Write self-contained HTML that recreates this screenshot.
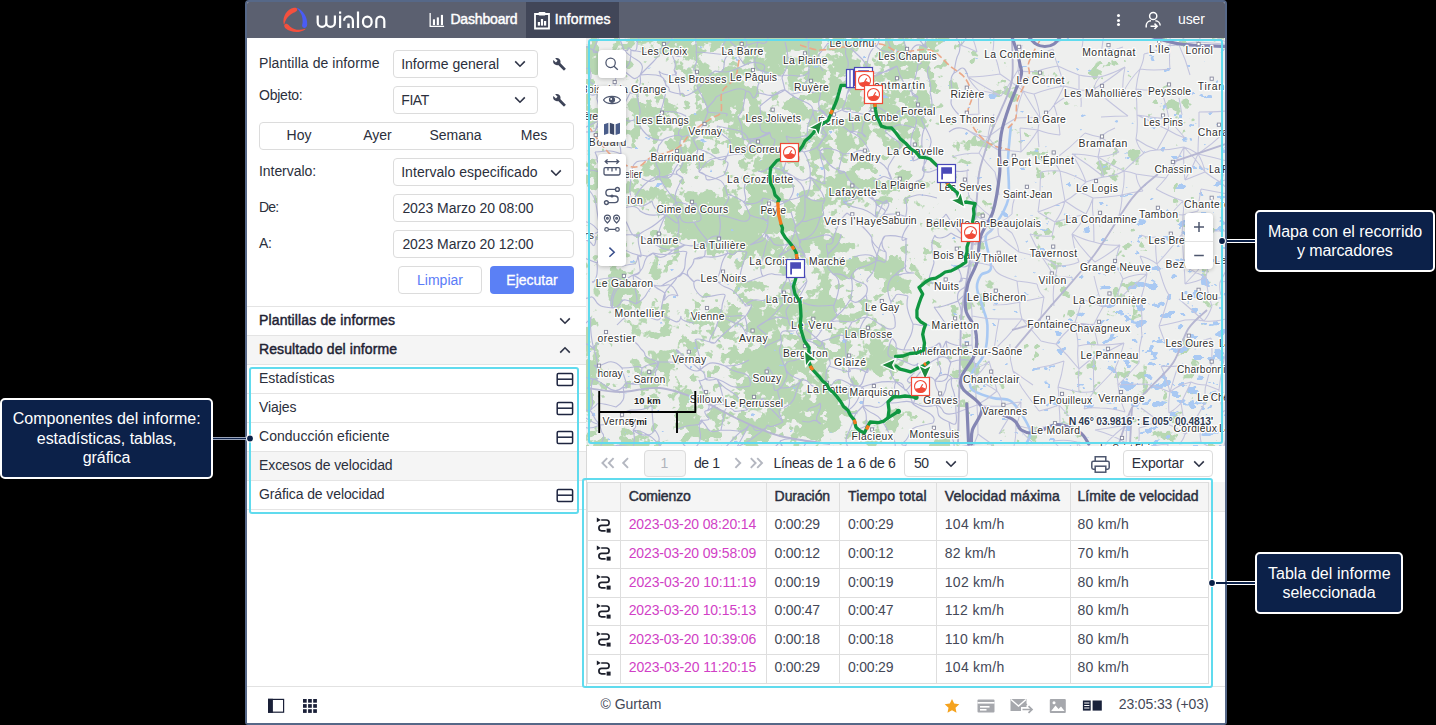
<!DOCTYPE html>
<html><head><meta charset="utf-8">
<style>
*{box-sizing:border-box;margin:0;padding:0}
html,body{width:1436px;height:725px;background:#000;overflow:hidden}
body{font-family:"Liberation Sans",sans-serif;font-size:14px;color:#2b2f3c;position:relative}
.abs{position:absolute}
#win{position:absolute;left:245px;top:0;width:982px;height:725px;background:#fff;border:2px solid #566888;border-radius:4px 4px 3px 3px;overflow:hidden}
#in{position:absolute;left:-247px;top:-2px;width:1436px;height:725px}
#topbar{position:absolute;left:247px;top:2px;width:978px;height:36px;background:#5b6070}
.t{position:absolute;white-space:nowrap;line-height:16px;transform-origin:0 50%}
.lbl{color:#2b2f3c;font-size:14px}
.box{position:absolute;border:1px solid #dcdcdc;border-radius:4px;background:#fff}
.hl{position:absolute;border:2px solid #60dbee;border-radius:3px}
.sep{position:absolute;height:1px;background:#e3e3e3}
.callout{position:absolute;background:#0c2149;border:2px solid #fff;border-radius:5px;color:#fff;font-size:16px;line-height:19px;text-align:center}
</style></head><body>
<div id="win"><div id="in">
<div class="abs" style="left:247px;top:2px;width:978px;height:36px;background:#5b6070;"></div>
<div class="abs" style="left:526px;top:2px;width:93px;height:36px;background:#414658;"></div>
<svg class="abs" style="left:281px;top:5px" width="30" height="30" viewBox="0 0 30 30">
<path d="M2.7 19.2 C1.2 11.5 6 4.2 12.8 2.8 C15.6 2.3 17.4 4.2 15.6 6 C14.8 6.9 13.6 7.2 12.4 7.8 C8 10 4.6 14 3.4 19.3 Z" fill="#f4503e"/>
<path d="M16.4 3.1 C21.8 5.6 26.6 12 26.2 19.5 C26.1 23 22.6 24 21.3 21.6 C20.7 20.4 21.4 19 21.6 17.4 C22 12.4 20.4 7.6 16.1 3.5 Z" fill="#4a5cf5"/>
<path d="M24.4 24.2 C19.4 28.2 10.2 28 4.4 23.2 C2 21 3.6 18.2 6.2 19 C7.4 19.4 8 20.6 9 21.4 C13 24.8 18.6 25.8 24.2 23.7 Z" fill="#f4503e"/>
</svg>
<svg class="abs" style="left:314px;top:9px" width="76" height="22" viewBox="314 9 76 22" fill="none" stroke="#fff" stroke-width="2.2">
<path d="M317.7 15.4 V22.5 A4.3 4.3 0 0 0 326.3 22.5 V15.4 M326.3 22.5 A4.3 4.3 0 0 0 334.9 22.5 V15.4"/>
<path d="M340.1 11.4 V13.7 M340.1 15.4 V27.9"/>
<path d="M344.1 20.8 A4.4 4.4 0 0 1 352.9 20.8 V27.9"/>
<path d="M348.5 23.4 V27.9" stroke-width="2.4"/>
<path d="M358 11.4 V27.9"/>
<path d="M363 21.2 A4.3 4.6 0 0 1 371.6 21.2 V22.2 A4.3 4.6 0 0 1 363 22.2 Z"/>
<path d="M376.3 27.9 V20.9 A4 4.3 0 0 1 384.3 20.9 V27.9"/>
</svg>
<svg class="abs" style="left:429px;top:12px" width="17" height="17" viewBox="0 0 17 17" fill="#fff">
<path d="M0.500 1 h1.300 v12.700 h13.300 v1.200 h-14.600 z"/><rect x="3.9" y="7.3" width="2.100" height="5.800"/><rect x="7.800" y="5.4" width="2.100" height="7.700"/><rect x="11.9" y="2.9" width="2.100" height="10.2"/></svg>
<div class="t" style="left:450.40px;top:10.90px;font-size:14px;line-height:16px;color:#fff;letter-spacing:-0.165px;-webkit-text-stroke:0.45px #fff;">Dashboard</div>
<svg class="abs" style="left:533px;top:11px" width="18" height="19" viewBox="0 0 18 19">
<path d="M2 3 h14 v14.5 h-14 z" fill="none" stroke="#fff" stroke-width="1.8"/><rect x="5.5" y="1" width="7" height="3.4" rx="1" fill="#fff"/>
<rect x="4.8" y="11" width="2.2" height="3.6" fill="#fff"/><rect x="7.9" y="8" width="2.2" height="6.6" fill="#fff"/><rect x="11" y="10" width="2.2" height="4.6" fill="#fff"/></svg>
<div class="t" style="left:554.80px;top:10.90px;font-size:14px;line-height:16px;color:#fff;letter-spacing:0.168px;-webkit-text-stroke:0.45px #fff;">Informes</div>
<div class="abs" style="left:1117.3px;top:13.7px;width:3px;height:3px;border-radius:50%;background:#fff"></div>
<div class="abs" style="left:1117.3px;top:18.5px;width:3px;height:3px;border-radius:50%;background:#fff"></div>
<div class="abs" style="left:1117.3px;top:23.3px;width:3px;height:3px;border-radius:50%;background:#fff"></div>
<svg class="abs" style="left:1144px;top:10px" width="19" height="20" viewBox="0 0 19 20" fill="none" stroke="#fff" stroke-width="1.5">
<circle cx="9.2" cy="6" r="3.6"/><path d="M2.2 17.5 V15.5 A5 5 0 0 1 7 10.8 M11.4 10.8 A5 5 0 0 1 16.2 15.5"/><path d="M6.5 16.3 H13 M10.5 13.6 L13.2 16.3 L10.5 19"/></svg>
<div class="t" style="left:1178.00px;top:10.90px;font-size:14px;line-height:16px;color:#fff;letter-spacing:-0.108px;">user</div>

<div class="abs" style="left:247px;top:38px;width:339px;height:648px;background:#fff;"></div>
<div class="abs" style="left:586px;top:38px;width:1px;height:648px;background:#d8d8d8;"></div>
<div class="t" style="left:259.00px;top:55.00px;font-size:14px;line-height:16px;color:#2b2f3c;letter-spacing:0.072px;">Plantilla de informe</div>
<div class="box" style="left:393px;top:50px;width:145px;height:28px;"></div>
<div class="t" style="left:401.20px;top:56.00px;font-size:14px;line-height:16px;color:#2b2f3c;letter-spacing:-0.016px;">Informe general</div>
<svg class="abs" style="left:514px;top:59.8px" width="12" height="8" viewBox="0 0 12 8" fill="none" stroke="#2f3447" stroke-width="1.6"><path d="M1.2 1.4 L6 6.2 L10.8 1.4"/></svg>
<svg class="abs" style="left:553px;top:58px" width="14" height="13" viewBox="0 0 14 13"><path d="M12.6 10.4 L7.3 5.1 C7.8 3.7 7.5 2.2 6.4 1.1 C5.3 0 3.600 -0.300 2.200 0.300 L4.6 2.7 L2.9 4.400 L0.400 2.000 C-0.200 3.300 0.100 5.000 1.200 6.100 C2.300 7.200 3.900 7.500 5.200 7.000 L10.5 12.3 C10.800 12.600 11.200 12.600 11.400 12.300 L12.700 11.000 C13.000 10.900 13.000 10.600 12.600 10.400 Z" fill="#3e4458"/></svg>
<div class="t" style="left:259.00px;top:87.30px;font-size:14px;line-height:16px;color:#2b2f3c;letter-spacing:-0.234px;">Objeto:</div>
<div class="box" style="left:393px;top:86px;width:145px;height:28px;"></div>
<div class="t" style="left:401.30px;top:92.00px;font-size:14px;line-height:16px;color:#2b2f3c;letter-spacing:-0.448px;">FIAT</div>
<svg class="abs" style="left:514px;top:95.8px" width="12" height="8" viewBox="0 0 12 8" fill="none" stroke="#2f3447" stroke-width="1.6"><path d="M1.2 1.4 L6 6.2 L10.8 1.4"/></svg>
<svg class="abs" style="left:553px;top:94px" width="14" height="13" viewBox="0 0 14 13"><path d="M12.6 10.4 L7.3 5.1 C7.8 3.7 7.5 2.2 6.4 1.1 C5.3 0 3.600 -0.300 2.200 0.300 L4.6 2.7 L2.9 4.400 L0.400 2.000 C-0.200 3.300 0.100 5.000 1.200 6.100 C2.300 7.200 3.900 7.500 5.200 7.000 L10.5 12.3 C10.800 12.600 11.200 12.600 11.400 12.300 L12.700 11.000 C13.000 10.900 13.000 10.600 12.600 10.400 Z" fill="#3e4458"/></svg>
<div class="box" style="left:259px;top:122px;width:315px;height:28px;"></div>
<div class="t" style="left:286.55px;top:127.00px;font-size:14px;line-height:16px;color:#2b2f3c;">Hoy</div>
<div class="t" style="left:363.23px;top:127.00px;font-size:14px;line-height:16px;color:#2b2f3c;">Ayer</div>
<div class="t" style="left:429.43px;top:127.00px;font-size:14px;line-height:16px;color:#2b2f3c;">Semana</div>
<div class="t" style="left:520.78px;top:127.00px;font-size:14px;line-height:16px;color:#2b2f3c;">Mes</div>
<div class="t" style="left:259.00px;top:163.00px;font-size:14px;line-height:16px;color:#2b2f3c;letter-spacing:-0.058px;">Intervalo:</div>
<div class="box" style="left:393px;top:158px;width:181px;height:28px;"></div>
<div class="t" style="left:401.20px;top:164.00px;font-size:14px;line-height:16px;color:#2b2f3c;letter-spacing:0.045px;">Intervalo especificado</div>
<svg class="abs" style="left:550px;top:168.5px" width="12" height="8" viewBox="0 0 12 8" fill="none" stroke="#2f3447" stroke-width="1.6"><path d="M1.2 1.4 L6 6.2 L10.8 1.4"/></svg>
<div class="t" style="left:259.00px;top:199.00px;font-size:14px;line-height:16px;color:#2b2f3c;letter-spacing:-0.762px;">De:</div>
<div class="box" style="left:393px;top:194px;width:181px;height:28px;"></div>
<div class="t" style="left:402.40px;top:200.00px;font-size:14px;line-height:16px;color:#2b2f3c;letter-spacing:-0.069px;">2023 Marzo 20 08:00</div>
<div class="t" style="left:259.00px;top:235.00px;font-size:14px;line-height:16px;color:#2b2f3c;letter-spacing:-0.364px;">A:</div>
<div class="box" style="left:393px;top:230px;width:181px;height:28px;"></div>
<div class="t" style="left:402.40px;top:236.00px;font-size:14px;line-height:16px;color:#2b2f3c;letter-spacing:-0.069px;">2023 Marzo 20 12:00</div>
<div class="box" style="left:398px;top:266px;width:84px;height:28px;"></div>
<div class="t" style="left:417.05px;top:272.00px;font-size:14px;line-height:16px;color:#5b7cf7;">Limpiar</div>
<div class="abs" style="left:490px;top:266px;width:84px;height:28px;background:#5b80f5;border-radius:4px"></div>
<div class="t" style="left:506.32px;top:272.00px;font-size:14px;line-height:16px;color:#fff;-webkit-text-stroke:0.3px #fff;">Ejecutar</div>
<div class="abs" style="left:247px;top:306px;width:339px;height:1px;background:#e4e4e4;"></div>
<div class="t" style="left:259.00px;top:312.00px;font-size:14px;line-height:16px;color:#1e2233;letter-spacing:0.134px;-webkit-text-stroke:0.45px #1e2233;">Plantillas de informes</div>
<svg class="abs" style="left:559px;top:317px" width="12" height="8" viewBox="0 0 12 8" fill="none" stroke="#2f3447" stroke-width="1.6"><path d="M1.2 1.4 L6 6.2 L10.8 1.4"/></svg>
<div class="abs" style="left:247px;top:335px;width:339px;height:1px;background:#e4e4e4;"></div>
<div class="abs" style="left:247px;top:336px;width:339px;height:28px;background:#f5f5f5;"></div>
<div class="t" style="left:259.00px;top:341.00px;font-size:14px;line-height:16px;color:#1e2233;letter-spacing:0.087px;-webkit-text-stroke:0.45px #1e2233;">Resultado del informe</div>
<svg class="abs" style="left:559px;top:345.5px" width="12" height="8" viewBox="0 0 12 8" fill="none" stroke="#2f3447" stroke-width="1.6"><path d="M1.2 6.6 L6 1.8 L10.8 6.6"/></svg>
<div class="abs" style="left:247px;top:364px;width:339px;height:1px;background:#e4e4e4;"></div>
<div class="t" style="left:259.00px;top:370.00px;font-size:14px;line-height:16px;color:#2b2f3c;letter-spacing:0.002px;">Estadísticas</div>
<div class="abs" style="left:247px;top:393px;width:339px;height:1px;background:#e4e4e4;"></div>
<svg class="abs" style="left:556px;top:372.2px" width="18" height="15" viewBox="0 0 18 15" fill="none" stroke="#1e2540" stroke-width="1.5"><rect x="1.2" y="1.5" width="15.4" height="12" rx="1.2"/><path d="M1.2 7.2 H16.6"/></svg>
<div class="t" style="left:259.00px;top:399.00px;font-size:14px;line-height:16px;color:#2b2f3c;letter-spacing:-0.063px;">Viajes</div>
<div class="abs" style="left:247px;top:422px;width:339px;height:1px;background:#e4e4e4;"></div>
<svg class="abs" style="left:556px;top:401.2px" width="18" height="15" viewBox="0 0 18 15" fill="none" stroke="#1e2540" stroke-width="1.5"><rect x="1.2" y="1.5" width="15.4" height="12" rx="1.2"/><path d="M1.2 7.2 H16.6"/></svg>
<div class="t" style="left:259.00px;top:428.00px;font-size:14px;line-height:16px;color:#2b2f3c;letter-spacing:0.027px;">Conducción eficiente</div>
<div class="abs" style="left:247px;top:451px;width:339px;height:1px;background:#e4e4e4;"></div>
<svg class="abs" style="left:556px;top:430.2px" width="18" height="15" viewBox="0 0 18 15" fill="none" stroke="#1e2540" stroke-width="1.5"><rect x="1.2" y="1.5" width="15.4" height="12" rx="1.2"/><path d="M1.2 7.2 H16.6"/></svg>
<div class="abs" style="left:247px;top:452px;width:339px;height:28px;background:#f5f5f5;"></div>
<div class="t" style="left:259.00px;top:457.00px;font-size:14px;line-height:16px;color:#2b2f3c;letter-spacing:-0.095px;">Excesos de velocidad</div>
<div class="abs" style="left:247px;top:480px;width:339px;height:1px;background:#e4e4e4;"></div>
<div class="t" style="left:259.00px;top:486.00px;font-size:14px;line-height:16px;color:#2b2f3c;letter-spacing:-0.106px;">Gráfica de velocidad</div>
<div class="abs" style="left:247px;top:509px;width:339px;height:1px;background:#e4e4e4;"></div>
<svg class="abs" style="left:556px;top:488.2px" width="18" height="15" viewBox="0 0 18 15" fill="none" stroke="#1e2540" stroke-width="1.5"><rect x="1.2" y="1.5" width="15.4" height="12" rx="1.2"/><path d="M1.2 7.2 H16.6"/></svg>
<div class="hl" style="left:249px;top:367px;width:330px;height:147px;"></div>
<svg class="abs" style="left:586px;top:38px" width="639" height="408" viewBox="586 38 639 408" font-family="Liberation Sans, sans-serif">
<defs><filter id="ff" x="586" y="38" width="639" height="408" filterUnits="userSpaceOnUse" color-interpolation-filters="sRGB">
<feTurbulence type="fractalNoise" baseFrequency="0.02" numOctaves="3" seed="4" result="n"/>
<feColorMatrix in="n" type="matrix" values="0 0 0 0 0 0 0 0 0 0 0 0 0 0 0 1 0 0 0 0" result="na0"/><feTurbulence type="fractalNoise" baseFrequency="0.1" numOctaves="3" seed="11" result="m"/>
<feColorMatrix in="m" type="matrix" values="0 0 0 0 0 0 0 0 0 0 0 0 0 0 0 1 0 0 0 0" result="ma"/>
<feComposite in="na0" in2="ma" operator="arithmetic" k1="0" k2="0.58" k3="0.42" k4="0" result="na"/>
<feGaussianBlur in="SourceGraphic" stdDeviation="12" result="d"/>
<feComposite in="na" in2="d" operator="arithmetic" k1="0" k2="1" k3="0.45" k4="-0.22" result="s"/>
<feComponentTransfer in="s" result="t"><feFuncA type="linear" slope="40" intercept="-19.5"/></feComponentTransfer>
<feFlood flood-color="#b7d7b2"/><feComposite in2="t" operator="in"/>
</filter><filter id="fw" x="586" y="38" width="639" height="408" filterUnits="userSpaceOnUse" color-interpolation-filters="sRGB">
<feTurbulence type="fractalNoise" baseFrequency="0.075 0.11" numOctaves="3" seed="5" result="n"/>
<feColorMatrix in="n" type="matrix" values="0 0 0 0 0 0 0 0 0 0 0 0 0 0 0 1 0 0 0 0" result="na"/>
<feGaussianBlur in="SourceGraphic" stdDeviation="14" result="d"/>
<feComposite in="na" in2="d" operator="arithmetic" k1="0" k2="1" k3="0.6" k4="-0.4" result="s"/>
<feComponentTransfer in="s" result="t"><feFuncA type="linear" slope="40" intercept="-19.5"/></feComponentTransfer>
<feFlood flood-color="#a9c9f3"/><feComposite in2="t" operator="in"/>
</filter></defs>
<rect x="586" y="38" width="639" height="408" fill="#eeefee"/>
<g filter="url(#ff)"><rect x="527" y="-22" width="124" height="124" fill="#000" fill-opacity="0.452"/><rect x="651" y="-22" width="64" height="124" fill="#000" fill-opacity="0.631"/><rect x="715" y="-22" width="64" height="124" fill="#000" fill-opacity="0.566"/><rect x="779" y="-22" width="64" height="124" fill="#000" fill-opacity="0.574"/><rect x="843" y="-22" width="64" height="124" fill="#000" fill-opacity="0.677"/><rect x="907" y="-22" width="64" height="124" fill="#000" fill-opacity="0.284"/><rect x="971" y="-22" width="64" height="124" fill="#000" fill-opacity="0.268"/><rect x="1035" y="-22" width="64" height="124" fill="#000" fill-opacity="0.110"/><rect x="1099" y="-22" width="64" height="124" fill="#000" fill-opacity="0.276"/><rect x="1163" y="-22" width="124" height="124" fill="#000" fill-opacity="0.222"/><rect x="527" y="102" width="124" height="64" fill="#000" fill-opacity="0.268"/><rect x="651" y="102" width="64" height="64" fill="#000" fill-opacity="0.465"/><rect x="715" y="102" width="64" height="64" fill="#000" fill-opacity="0.671"/><rect x="779" y="102" width="64" height="64" fill="#000" fill-opacity="0.604"/><rect x="843" y="102" width="64" height="64" fill="#000" fill-opacity="0.518"/><rect x="907" y="102" width="64" height="64" fill="#000" fill-opacity="0.235"/><rect x="971" y="102" width="64" height="64" fill="#000" fill-opacity="0.285"/><rect x="1035" y="102" width="64" height="64" fill="#000" fill-opacity="0.212"/><rect x="1099" y="102" width="64" height="64" fill="#000" fill-opacity="0.226"/><rect x="1163" y="102" width="124" height="64" fill="#000" fill-opacity="0.030"/><rect x="527" y="166" width="124" height="64" fill="#000" fill-opacity="0.431"/><rect x="651" y="166" width="64" height="64" fill="#000" fill-opacity="0.615"/><rect x="715" y="166" width="64" height="64" fill="#000" fill-opacity="0.610"/><rect x="779" y="166" width="64" height="64" fill="#000" fill-opacity="0.473"/><rect x="843" y="166" width="64" height="64" fill="#000" fill-opacity="0.481"/><rect x="907" y="166" width="64" height="64" fill="#000" fill-opacity="0.253"/><rect x="971" y="166" width="64" height="64" fill="#000" fill-opacity="0.224"/><rect x="1035" y="166" width="64" height="64" fill="#000" fill-opacity="0.265"/><rect x="1099" y="166" width="64" height="64" fill="#000" fill-opacity="0.066"/><rect x="1163" y="166" width="124" height="64" fill="#000" fill-opacity="0.087"/><rect x="527" y="230" width="124" height="64" fill="#000" fill-opacity="0.307"/><rect x="651" y="230" width="64" height="64" fill="#000" fill-opacity="0.370"/><rect x="715" y="230" width="64" height="64" fill="#000" fill-opacity="0.664"/><rect x="779" y="230" width="64" height="64" fill="#000" fill-opacity="0.663"/><rect x="843" y="230" width="64" height="64" fill="#000" fill-opacity="0.372"/><rect x="907" y="230" width="64" height="64" fill="#000" fill-opacity="0.301"/><rect x="971" y="230" width="64" height="64" fill="#000" fill-opacity="0.139"/><rect x="1035" y="230" width="64" height="64" fill="#000" fill-opacity="0.388"/><rect x="1099" y="230" width="64" height="64" fill="#000" fill-opacity="0.076"/><rect x="1163" y="230" width="124" height="64" fill="#000" fill-opacity="0.244"/><rect x="527" y="294" width="124" height="64" fill="#000" fill-opacity="0.353"/><rect x="651" y="294" width="64" height="64" fill="#000" fill-opacity="0.369"/><rect x="715" y="294" width="64" height="64" fill="#000" fill-opacity="0.483"/><rect x="779" y="294" width="64" height="64" fill="#000" fill-opacity="0.636"/><rect x="843" y="294" width="64" height="64" fill="#000" fill-opacity="0.400"/><rect x="907" y="294" width="64" height="64" fill="#000" fill-opacity="0.303"/><rect x="971" y="294" width="64" height="64" fill="#000" fill-opacity="0.139"/><rect x="1035" y="294" width="64" height="64" fill="#000" fill-opacity="0.253"/><rect x="1099" y="294" width="64" height="64" fill="#000" fill-opacity="0.197"/><rect x="1163" y="294" width="124" height="64" fill="#000" fill-opacity="0.252"/><rect x="527" y="358" width="124" height="64" fill="#000" fill-opacity="0.340"/><rect x="651" y="358" width="64" height="64" fill="#000" fill-opacity="0.479"/><rect x="715" y="358" width="64" height="64" fill="#000" fill-opacity="0.663"/><rect x="779" y="358" width="64" height="64" fill="#000" fill-opacity="0.542"/><rect x="843" y="358" width="64" height="64" fill="#000" fill-opacity="0.405"/><rect x="907" y="358" width="64" height="64" fill="#000" fill-opacity="0.200"/><rect x="971" y="358" width="64" height="64" fill="#000" fill-opacity="0.031"/><rect x="1035" y="358" width="64" height="64" fill="#000" fill-opacity="0.081"/><rect x="1099" y="358" width="64" height="64" fill="#000" fill-opacity="0.187"/><rect x="1163" y="358" width="124" height="64" fill="#000" fill-opacity="0.301"/><rect x="527" y="422" width="124" height="124" fill="#000" fill-opacity="0.547"/><rect x="651" y="422" width="64" height="124" fill="#000" fill-opacity="0.270"/><rect x="715" y="422" width="64" height="124" fill="#000" fill-opacity="0.417"/><rect x="779" y="422" width="64" height="124" fill="#000" fill-opacity="0.212"/><rect x="843" y="422" width="64" height="124" fill="#000" fill-opacity="0.396"/><rect x="907" y="422" width="64" height="124" fill="#000" fill-opacity="0.490"/><rect x="971" y="422" width="64" height="124" fill="#000" fill-opacity="0.299"/><rect x="1035" y="422" width="64" height="124" fill="#000" fill-opacity="0.003"/><rect x="1099" y="422" width="64" height="124" fill="#000" fill-opacity="0.351"/><rect x="1163" y="422" width="124" height="124" fill="#000" fill-opacity="0.317"/></g>
<g filter="url(#fw)"><rect x="527" y="-22" width="124" height="124" fill="#000" fill-opacity="0.115"/><rect x="651" y="-22" width="64" height="124" fill="#000" fill-opacity="0.145"/><rect x="715" y="-22" width="64" height="124" fill="#000" fill-opacity="0.105"/><rect x="779" y="-22" width="64" height="124" fill="#000" fill-opacity="0.159"/><rect x="843" y="-22" width="64" height="124" fill="#000" fill-opacity="0.125"/><rect x="907" y="-22" width="64" height="124" fill="#000" fill-opacity="0.149"/><rect x="971" y="-22" width="64" height="124" fill="#000" fill-opacity="0.180"/><rect x="1035" y="-22" width="64" height="124" fill="#000" fill-opacity="0.192"/><rect x="1099" y="-22" width="64" height="124" fill="#000" fill-opacity="0.171"/><rect x="1163" y="-22" width="124" height="124" fill="#000" fill-opacity="0.215"/><rect x="527" y="102" width="124" height="64" fill="#000" fill-opacity="0.135"/><rect x="651" y="102" width="64" height="64" fill="#000" fill-opacity="0.132"/><rect x="715" y="102" width="64" height="64" fill="#000" fill-opacity="0.169"/><rect x="779" y="102" width="64" height="64" fill="#000" fill-opacity="0.144"/><rect x="843" y="102" width="64" height="64" fill="#000" fill-opacity="0.153"/><rect x="907" y="102" width="64" height="64" fill="#000" fill-opacity="0.131"/><rect x="971" y="102" width="64" height="64" fill="#000" fill-opacity="0.234"/><rect x="1035" y="102" width="64" height="64" fill="#000" fill-opacity="0.203"/><rect x="1099" y="102" width="64" height="64" fill="#000" fill-opacity="0.233"/><rect x="1163" y="102" width="124" height="64" fill="#000" fill-opacity="0.357"/><rect x="527" y="166" width="124" height="64" fill="#000" fill-opacity="0.174"/><rect x="651" y="166" width="64" height="64" fill="#000" fill-opacity="0.125"/><rect x="715" y="166" width="64" height="64" fill="#000" fill-opacity="0.140"/><rect x="779" y="166" width="64" height="64" fill="#000" fill-opacity="0.132"/><rect x="843" y="166" width="64" height="64" fill="#000" fill-opacity="0.142"/><rect x="907" y="166" width="64" height="64" fill="#000" fill-opacity="0.147"/><rect x="971" y="166" width="64" height="64" fill="#000" fill-opacity="0.157"/><rect x="1035" y="166" width="64" height="64" fill="#000" fill-opacity="0.213"/><rect x="1099" y="166" width="64" height="64" fill="#000" fill-opacity="0.216"/><rect x="1163" y="166" width="124" height="64" fill="#000" fill-opacity="0.273"/><rect x="527" y="230" width="124" height="64" fill="#000" fill-opacity="0.164"/><rect x="651" y="230" width="64" height="64" fill="#000" fill-opacity="0.146"/><rect x="715" y="230" width="64" height="64" fill="#000" fill-opacity="0.137"/><rect x="779" y="230" width="64" height="64" fill="#000" fill-opacity="0.135"/><rect x="843" y="230" width="64" height="64" fill="#000" fill-opacity="0.175"/><rect x="907" y="230" width="64" height="64" fill="#000" fill-opacity="0.157"/><rect x="971" y="230" width="64" height="64" fill="#000" fill-opacity="0.244"/><rect x="1035" y="230" width="64" height="64" fill="#000" fill-opacity="0.261"/><rect x="1099" y="230" width="64" height="64" fill="#000" fill-opacity="0.375"/><rect x="1163" y="230" width="124" height="64" fill="#000" fill-opacity="0.482"/><rect x="527" y="294" width="124" height="64" fill="#000" fill-opacity="0.151"/><rect x="651" y="294" width="64" height="64" fill="#000" fill-opacity="0.158"/><rect x="715" y="294" width="64" height="64" fill="#000" fill-opacity="0.195"/><rect x="779" y="294" width="64" height="64" fill="#000" fill-opacity="0.131"/><rect x="843" y="294" width="64" height="64" fill="#000" fill-opacity="0.150"/><rect x="907" y="294" width="64" height="64" fill="#000" fill-opacity="0.178"/><rect x="971" y="294" width="64" height="64" fill="#000" fill-opacity="0.217"/><rect x="1035" y="294" width="64" height="64" fill="#000" fill-opacity="0.325"/><rect x="1099" y="294" width="64" height="64" fill="#000" fill-opacity="0.445"/><rect x="1163" y="294" width="124" height="64" fill="#000" fill-opacity="0.409"/><rect x="527" y="358" width="124" height="64" fill="#000" fill-opacity="0.135"/><rect x="651" y="358" width="64" height="64" fill="#000" fill-opacity="0.146"/><rect x="715" y="358" width="64" height="64" fill="#000" fill-opacity="0.142"/><rect x="779" y="358" width="64" height="64" fill="#000" fill-opacity="0.155"/><rect x="843" y="358" width="64" height="64" fill="#000" fill-opacity="0.157"/><rect x="907" y="358" width="64" height="64" fill="#000" fill-opacity="0.196"/><rect x="971" y="358" width="64" height="64" fill="#000" fill-opacity="0.192"/><rect x="1035" y="358" width="64" height="64" fill="#000" fill-opacity="0.326"/><rect x="1099" y="358" width="64" height="64" fill="#000" fill-opacity="0.442"/><rect x="1163" y="358" width="124" height="64" fill="#000" fill-opacity="0.487"/><rect x="527" y="422" width="124" height="124" fill="#000" fill-opacity="0.165"/><rect x="651" y="422" width="64" height="124" fill="#000" fill-opacity="0.176"/><rect x="715" y="422" width="64" height="124" fill="#000" fill-opacity="0.097"/><rect x="779" y="422" width="64" height="124" fill="#000" fill-opacity="0.130"/><rect x="843" y="422" width="64" height="124" fill="#000" fill-opacity="0.164"/><rect x="907" y="422" width="64" height="124" fill="#000" fill-opacity="0.116"/><rect x="971" y="422" width="64" height="124" fill="#000" fill-opacity="0.177"/><rect x="1035" y="422" width="64" height="124" fill="#000" fill-opacity="0.303"/><rect x="1099" y="422" width="64" height="124" fill="#000" fill-opacity="0.316"/><rect x="1163" y="422" width="124" height="124" fill="#000" fill-opacity="0.351"/></g>
<path d="M1011.0 125.0 C1010.5 130.8 1008.5 147.5 1008.0 160.0 C1007.5 172.5 1010.5 188.7 1008.0 200.0 C1005.5 211.3 996.8 221.7 993.0 228.0 C989.2 234.3 985.8 231.3 985.5 238.0 C985.2 244.7 991.8 261.8 991.0 268.0 C990.2 274.2 983.3 271.7 981.0 275.0 C978.7 278.3 976.6 282.2 977.0 288.0 C977.4 293.8 981.9 303.8 983.6 310.0 C985.3 316.2 987.2 317.8 987.4 325.0 C987.6 332.2 987.1 345.2 984.6 353.0 C982.1 360.8 974.6 366.0 972.4 372.0 C970.2 378.0 968.1 384.7 971.5 389.0 C974.9 393.3 986.2 395.8 993.0 398.0 C999.8 400.2 1005.8 396.7 1012.0 402.0 C1018.2 407.3 1027.7 423.0 1030.0 430.0 C1032.3 437.0 1026.7 441.7 1026.0 444.0" fill="none" stroke="#a9c9f3" stroke-width="2.6"/>
<path d="M577 49Q583 45 585 46T597 52M577 49Q576 52 569 61T571 74M571 74Q575 74 583 70T590 70M580 91Q582 90 589 94T601 87M575 108Q577 108 584 113T602 118M575 108Q575 114 576 115T568 131M568 131Q574 132 584 132T595 131M576 148Q572 156 573 159T579 171M579 171Q589 169 596 171T603 173M579 171Q577 178 578 180T571 189M571 189Q577 198 580 201T582 221M582 221Q591 222 596 228T599 224M582 221Q580 224 583 226T581 240M581 240Q589 239 592 244T596 238M581 240Q578 245 579 253T568 256M568 256Q573 255 578 256T597 263M582 299Q589 298 591 297T597 303M582 299Q579 301 580 308T570 327M570 327Q579 324 583 324T591 317M570 327Q569 333 573 337T569 349M569 349Q574 349 580 345T594 349M569 349Q573 354 577 356T574 365M574 365Q574 370 573 371T573 385M573 385Q575 386 578 381T593 379M570 399Q572 404 579 407T589 411M570 399Q574 408 582 415T600 425M580 423Q584 428 589 428T600 425M579 444Q582 448 587 452T599 451M579 444Q584 453 583 461T582 475M579 444Q589 452 594 461T602 476M582 475Q588 476 591 476T602 476M600 32Q599 37 595 46T597 52M597 52Q603 52 606 55T624 50M590 70Q592 77 590 80T601 87M601 87Q596 95 597 99T602 118M602 118Q599 118 599 119T595 131M602 118Q601 121 604 128T611 138M602 118Q593 124 584 128T568 131M595 152Q599 152 605 151T621 154M595 152Q598 159 597 159T603 173M589 190Q595 197 596 204T599 224M599 224Q600 232 596 233T596 238M596 238Q596 237 599 237T611 236M597 263Q603 260 606 260T623 266M597 263Q598 273 596 278T592 282M592 282Q598 279 609 278T621 280M597 303Q599 305 601 306T613 308M591 317Q590 323 591 333T594 349M594 349Q595 343 601 342T610 339M594 349Q596 354 597 361T594 365M594 365Q598 367 606 363T622 368M594 365Q598 368 599 374T593 379M593 379Q598 380 607 387T623 387M593 379Q590 387 592 397T589 411M589 411Q596 406 597 404T616 407M589 411Q591 410 593 415T600 425M600 425Q606 425 612 422T622 424M600 425Q601 432 603 434T599 451M599 451Q601 453 606 450T618 445M602 476Q605 472 614 468T621 462M616 35Q622 35 623 32T641 35M616 35Q619 37 621 42T624 50M624 50Q628 52 628 49T631 50M624 50Q628 55 637 60T640 75M623 70Q630 76 633 78T640 75M623 70Q619 75 617 76T615 87M615 87Q621 88 628 92T639 87M615 87Q613 93 615 97T623 107M615 87Q615 95 611 102T602 118M623 107Q625 110 625 117T637 119M623 107Q622 119 618 127T611 138M623 107Q612 113 605 119T595 131M611 138Q617 138 619 143T621 154M611 138Q611 142 616 144T632 148M621 154Q622 160 625 164T622 168M622 168Q622 169 623 171T631 174M613 193Q614 195 619 198T633 202M613 193Q613 202 618 207T616 212M616 212Q619 209 628 207T640 211M616 212Q616 217 614 221T611 236M616 212Q625 217 629 228T639 235M611 236Q614 236 624 235T639 235M611 236Q616 241 621 247T623 266M611 236Q615 238 620 245T638 255M611 236Q603 246 601 253T597 263M623 266Q631 264 634 264T638 255M621 280Q615 286 612 296T613 308M613 308Q619 307 621 302T636 304M617 325Q622 319 629 315T639 315M610 339Q621 336 629 339T641 349M622 368Q629 368 634 367T642 368M622 368Q623 374 626 382T623 387M623 387Q625 383 627 383T631 384M623 387Q625 396 623 400T616 407M622 424Q627 421 633 423T633 430M618 445Q622 446 626 446T634 451M618 445Q618 450 616 453T621 462M641 35Q637 39 637 46T631 50M631 50Q642 52 648 53T665 46M631 50Q631 56 630 61T623 70M640 75Q641 82 640 84T639 87M640 75Q647 74 656 75T666 85M639 87Q636 95 639 105T637 119M639 87Q632 89 629 95T623 107M637 119Q642 121 650 119T661 112M637 119Q639 127 646 134T663 140M631 174Q637 176 645 180T659 176M631 174Q631 179 630 187T633 202M633 202Q637 205 640 206T652 201M640 211Q647 216 656 215T666 215M639 235Q643 237 644 238T656 245M639 235Q637 240 640 250T638 255M638 255Q643 255 646 256T653 253M638 255Q639 263 640 269T633 275M633 275Q641 279 644 283T653 285M633 275Q634 285 636 293T636 304M633 275Q625 279 618 288T613 308M639 315Q647 316 654 319T661 315M641 349Q645 352 645 355T659 362M642 368Q646 365 652 364T659 362M642 368Q642 373 640 377T631 384M631 384Q637 385 649 383T658 381M631 410Q640 410 644 409T652 405M631 410Q625 411 622 415T622 424M633 430Q642 431 646 434T655 430M633 430Q635 436 634 442T634 451M633 430Q641 436 646 435T664 451M634 451Q638 451 640 453T635 462M657 25Q658 26 665 30T678 28M665 46Q673 53 675 55T682 56M665 46Q669 49 673 57T674 70M665 46Q658 57 653 62T640 75M659 71Q662 75 671 75T674 70M659 71Q661 77 662 77T666 85M666 85Q670 88 669 90T680 94M666 85Q666 95 663 104T661 112M661 112Q669 111 675 112T686 116M663 140Q665 138 673 136T682 137M663 140Q659 146 659 145T656 157M656 157Q660 160 665 160T683 159M656 157Q655 164 658 168T659 176M656 157Q647 161 640 161T631 174M659 176Q662 178 669 175T683 178M659 176Q662 184 670 194T676 202M659 176Q651 178 644 185T633 202M652 201Q653 206 655 208T666 215M666 215Q671 219 675 222T678 219M666 215Q663 220 660 228T656 245M666 215Q656 225 648 229T639 235M656 245Q662 249 669 250T685 245M653 253Q665 256 674 253T687 252M653 253Q646 255 644 264T633 275M653 285Q661 287 663 285T677 277M653 285Q656 288 662 291T663 300M653 285Q661 287 667 285T678 296M653 285Q648 291 646 295T636 304M663 300Q664 301 667 297T678 296M663 300Q662 304 661 311T661 315M661 315Q668 318 674 321T681 316M659 362Q666 362 668 362T684 363M659 362Q658 367 656 371T658 381M659 362Q654 372 647 378T631 384M652 405Q652 413 653 423T655 430M655 430Q660 437 659 440T664 451M664 451Q662 453 663 453T658 465M658 465Q664 468 671 470T687 466M678 28Q687 30 692 34T697 33M678 28Q676 33 674 36T665 46M674 70Q677 76 679 87T680 94M680 94Q683 92 684 95T698 89M686 116Q684 123 680 129T682 137M682 137Q688 135 696 134T700 135M682 137Q679 143 680 145T683 159M683 159Q689 160 693 158T698 149M683 159Q683 167 678 170T683 178M683 159Q676 165 673 173T659 176M683 178Q678 186 676 192T676 202M676 202Q681 202 686 204T696 203M676 202Q676 203 673 206T678 219M676 202Q679 207 680 216T694 222M678 219Q680 225 678 234T685 245M685 245Q693 247 700 244T708 241M685 245Q676 247 668 254T653 253M687 252Q685 258 685 265T677 277M677 277Q680 277 682 274T694 282M677 277Q676 280 670 286T663 300M681 316Q680 319 685 321T694 323M677 350Q675 349 679 354T684 363M677 350Q681 354 686 358T700 370M684 363Q687 368 692 370T700 370M678 429Q687 425 695 425T701 420M683 444Q689 450 691 450T696 447M697 33Q709 35 717 35T727 33M697 33Q695 38 696 44T696 52M696 52Q701 52 709 53T728 55M696 52Q698 61 695 66T696 71M696 71Q696 73 696 76T698 89M698 89Q700 92 704 100T708 112M708 112Q712 113 721 113T726 116M708 112Q705 120 703 124T700 135M700 135Q697 139 694 138T698 149M698 149Q707 151 715 157T727 156M698 149Q696 155 698 157T699 172M699 172Q706 173 706 178T724 175M699 172Q709 177 717 179T727 194M696 203Q696 206 700 214T694 222M696 203Q690 207 686 207T678 219M694 222Q694 222 697 227T708 241M708 241Q710 236 717 236T719 240M708 241Q705 249 705 254T694 259M694 259Q701 256 709 257T728 253M694 259Q694 264 689 269T694 282M694 282Q696 279 701 281T716 280M694 282Q693 287 697 292T704 297M704 297Q708 297 717 295T725 296M695 340Q697 338 703 340T715 343M695 340Q697 348 699 355T700 370M700 370Q703 367 708 364T725 366M700 370Q705 372 705 377T717 379M699 380Q699 382 705 379T717 379M699 380Q702 388 707 399T705 411M705 411Q709 411 714 406T728 407M705 411Q704 413 708 417T701 420M701 420Q705 424 708 429T721 430M701 420Q698 424 700 432T696 447M696 447Q699 451 700 450T702 465M727 33Q726 42 723 45T728 55M727 33Q728 41 735 46T741 49M728 55Q724 58 724 66T715 71M715 71Q722 72 726 72T745 65M715 71Q708 76 707 78T698 89M716 97Q723 93 733 90T746 91M716 97Q715 100 710 105T708 112M717 126Q726 128 736 130T748 139M717 126Q720 134 727 138T727 156M727 156Q735 154 740 154T746 150M727 156Q724 162 727 162T724 175M727 156Q717 158 712 159T699 172M727 194Q729 194 737 198T743 202M727 194Q730 198 727 202T719 215M719 215Q726 216 738 220T750 215M719 215Q721 223 720 230T719 240M719 240Q724 244 725 247T728 253M728 253Q734 256 735 253T747 252M728 253Q723 257 721 267T716 280M716 280Q718 283 723 282T741 282M716 280Q721 286 728 288T745 305M725 296Q722 304 722 307T719 315M719 315Q724 317 735 316T745 317M719 315Q718 326 712 335T715 343M719 315Q731 322 738 324T749 344M725 366Q732 366 737 365T749 360M725 366Q732 371 742 373T750 386M717 379Q723 381 729 385T750 386M717 379Q721 387 723 398T728 407M717 379Q721 386 730 391T747 410M728 407Q734 410 734 411T747 410M728 407Q725 408 724 414T721 430M721 430Q731 430 738 431T749 425M716 474Q725 470 731 471T738 470M739 21Q740 28 745 38T741 49M741 49Q745 47 746 46T758 42M741 49Q742 52 738 52T745 65M745 65Q750 61 759 63T763 71M746 91Q750 91 752 96T757 93M746 91Q745 95 744 103T738 117M738 117Q742 124 742 133T748 139M748 139Q758 139 764 135T770 133M748 139Q749 139 751 144T746 150M748 139Q752 141 758 143T770 154M747 181Q743 186 745 194T743 202M743 202Q750 205 756 203T763 198M743 202Q744 202 745 204T750 215M750 215Q754 217 759 218T768 221M750 245Q759 242 762 241T766 234M747 252Q745 257 742 267T741 282M741 282Q742 284 750 281T764 276M745 305Q752 299 758 300T765 300M745 305Q745 307 750 305T745 317M745 317Q748 326 747 332T749 344M745 317Q736 323 727 331T715 343M747 410Q753 402 759 400T762 399M749 425Q752 425 754 429T766 428M749 425Q746 431 742 438T737 447M749 425Q746 429 742 431T725 448M769 26Q769 27 774 28T789 33M769 26Q769 30 768 38T758 42M758 42Q756 48 755 59T763 71M763 71Q769 73 776 75T783 75M763 71Q763 74 760 80T757 93M757 93Q760 93 767 95T785 90M760 106Q761 114 760 124T770 133M770 133Q771 139 774 139T770 154M770 133Q765 136 756 139T746 150M758 171Q763 173 767 169T783 171M763 198Q768 199 774 201T789 200M763 198Q760 209 762 215T768 221M768 221Q768 229 764 234T750 245M766 234Q771 239 773 243T790 244M766 234Q769 240 768 240T763 257M763 257Q760 265 761 271T764 276M764 276Q771 273 773 274T787 275M765 300Q771 301 773 300T790 297M757 327Q766 320 774 318T788 319M757 327Q764 333 766 334T765 348M765 348Q764 347 768 345T781 339M768 367Q766 370 767 373T771 383M768 367Q771 371 776 380T781 388M771 383Q774 383 774 388T781 388M762 399Q766 401 770 402T783 408M762 399Q768 406 774 412T783 422M766 428Q767 424 769 426T783 422M766 428Q758 434 753 438T737 447M765 455Q771 451 777 445T780 441M765 455Q766 458 763 462T759 465M759 465Q765 467 769 465T788 468M789 33Q794 33 799 34T800 34M785 42Q788 53 788 60T783 75M783 75Q790 75 798 76T809 71M783 75Q782 78 782 78T785 90M785 90Q790 93 790 94T805 91M785 90Q793 97 803 101T813 110M785 90Q783 89 777 93T760 106M786 136Q790 138 794 138T808 135M786 136Q788 143 793 146T790 158M790 158Q795 157 794 152T804 152M790 158Q786 162 786 162T783 171M783 171Q789 173 796 178T810 177M783 171Q785 175 791 182T789 200M783 171Q789 174 797 180T805 196M789 200Q799 198 802 196T805 196M789 200Q785 203 776 206T768 221M791 212Q793 219 795 224T790 244M790 244Q793 243 797 247T799 240M790 244Q787 244 785 248T779 256M779 256Q783 254 789 250T805 255M779 256Q780 261 785 267T787 275M787 275Q788 278 783 287T790 297M787 275Q791 282 792 292T800 301M790 297Q787 295 790 298T800 301M790 297Q792 303 788 307T788 319M790 297Q785 301 778 310T757 327M788 319Q789 325 791 326T801 326M781 339Q782 344 780 348T785 367M785 367Q786 361 791 361T802 357M785 367Q786 372 787 374T781 388M785 367Q787 374 794 377T801 380M781 388Q791 388 796 385T801 380M781 388Q777 388 778 393T783 408M783 408Q779 409 779 411T783 422M780 441Q786 438 795 439T807 442M780 441Q783 450 783 453T788 468M780 441Q783 448 788 458T805 473M800 34Q810 32 815 28T823 31M800 34Q803 34 807 39T808 42M808 42Q809 49 809 53T809 71M809 71Q809 79 806 82T805 91M805 91Q807 90 811 92T821 87M813 110Q819 112 820 110T828 117M813 110Q814 112 810 120T808 135M813 110Q813 117 816 120T827 135M808 135Q803 142 804 146T790 158M804 152Q807 157 809 164T810 177M810 177Q817 181 822 183T824 181M810 177Q811 183 809 190T805 196M810 177Q813 181 818 187T825 200M805 196Q811 201 818 201T825 200M805 196Q805 205 805 211T802 221M802 221Q805 222 807 221T820 217M802 221Q796 227 795 227T799 240M799 240Q807 240 820 236T833 242M799 240Q802 242 800 243T805 255M805 255Q805 259 804 266T807 281M805 255Q800 255 799 259T787 275M807 281Q806 286 802 292T800 301M807 281Q801 289 794 295T790 297M800 301Q809 306 818 306T834 305M801 326Q805 323 812 325T830 322M801 326Q799 329 797 331T803 340M801 326Q809 331 815 337T822 341M801 326Q795 332 787 331T781 339M803 340Q812 341 817 345T822 341M801 380Q807 379 809 383T825 390M801 380Q797 388 795 396T783 408M808 411Q808 408 813 407T820 403M802 421Q809 423 812 421T821 424M807 442Q803 446 801 456T805 473M828 43Q830 46 835 45T847 45M828 43Q825 48 820 53T823 71M821 87Q821 92 819 101T828 117M828 117Q836 112 844 109T850 112M828 117Q827 123 823 129T827 135M828 117Q828 118 834 121T849 131M827 135Q825 137 820 143T820 151M827 135Q824 137 821 143T804 152M820 151Q824 147 832 149T843 154M820 151Q820 157 823 165T824 181M820 151Q825 160 830 165T845 172M825 200Q821 206 823 211T820 217M820 217Q818 227 813 233T799 240M833 242Q831 245 828 244T828 254M828 254Q827 258 827 263T833 274M833 274Q841 273 846 277T851 276M833 274Q839 277 839 285T834 305M834 305Q833 309 836 313T830 322M830 322Q835 321 837 321T852 322M830 322Q823 327 819 334T803 340M822 341Q830 339 837 336T846 340M822 341Q824 348 828 356T829 366M829 366Q837 369 845 371T849 369M829 366Q826 370 826 374T825 390M825 390Q830 388 834 382T851 385M820 403Q822 407 818 414T821 424M831 452Q836 453 841 456T851 452M842 30Q852 36 857 37T876 46M847 45Q855 46 861 43T876 46M847 45Q844 52 847 58T846 75M847 45Q856 53 862 59T867 77M846 75Q849 75 851 74T867 77M846 75Q849 83 849 86T847 94M847 94Q851 88 853 87T864 89M847 94Q846 102 843 107T850 112M850 112Q856 112 862 114T871 109M850 112Q852 116 853 126T849 131M849 131Q850 131 857 132T866 137M849 131Q857 134 863 141T871 158M843 154Q852 154 858 151T871 158M843 154Q841 160 839 168T845 172M845 172Q847 179 855 186T875 201M843 202Q851 201 860 196T875 201M843 202Q848 206 858 208T876 217M847 213Q853 217 862 226T872 238M847 213Q841 218 837 228T833 242M841 234Q840 242 836 246T828 254M854 257Q862 254 869 255T876 261M851 276Q853 284 852 291T850 300M851 276Q854 281 862 283T866 295M850 300Q850 300 854 302T866 295M850 300Q846 307 842 311T830 322M852 322Q854 322 857 320T867 317M852 322Q849 328 845 334T846 340M846 340Q849 339 853 335T862 337M846 340Q845 345 846 354T849 369M849 369Q859 367 864 371T868 368M849 369Q847 376 851 380T851 385M851 385Q853 384 851 384T862 387M851 385Q847 390 849 398T845 412M845 412Q845 410 850 413T863 406M853 422Q857 428 857 429T866 426M853 422Q850 429 847 436T851 452M851 452Q856 449 857 451T872 447M851 452Q852 456 853 460T851 476M851 452Q840 453 833 460T822 466M875 24Q879 34 879 39T876 46M876 46Q879 50 884 51T893 54M876 46Q870 50 868 59T867 77M867 77Q873 78 882 73T897 66M867 77Q871 81 870 85T864 89M864 89Q873 89 882 87T892 88M871 109Q877 106 880 108T893 117M871 109Q866 115 863 125T866 137M871 158Q874 159 881 163T892 180M873 181Q880 179 882 177T892 180M875 201Q876 199 882 202T887 200M875 201Q877 204 876 209T876 217M875 201Q876 205 882 208T883 215M876 217Q878 220 878 220T883 215M872 238Q871 243 875 251T876 261M872 238Q871 240 875 245T886 252M876 261Q879 260 883 262T886 252M876 261Q875 271 870 276T868 282M876 261Q868 266 862 267T851 276M866 295Q867 298 867 301T867 317M867 317Q871 318 881 325T895 327M867 317Q864 319 861 326T862 337M862 337Q874 336 881 338T892 338M868 368Q865 373 863 381T851 385M862 387Q868 385 876 383T896 382M862 387Q865 389 864 397T863 406M862 387Q861 394 857 401T845 412M863 406Q868 405 874 407T886 402M863 406Q863 408 865 411T866 426M863 406Q867 411 874 414T888 431M863 406Q862 407 858 411T853 422M872 447Q878 446 886 451T895 452M872 447Q872 455 874 462T867 472M867 472Q873 466 876 466T893 465M884 26Q891 25 897 23T908 25M884 26Q884 31 886 36T893 54M893 54Q896 59 898 59T910 55M897 66Q899 75 904 83T918 97M897 66Q887 73 876 73T864 89M893 117Q896 118 897 113T910 115M885 131Q894 126 898 125T915 128M885 131Q888 135 896 140T897 152M897 152Q892 160 889 165T892 180M892 180Q898 180 904 184T917 181M887 200Q885 202 888 203T883 215M887 200Q882 203 882 205T876 217M883 215Q893 213 901 215T911 223M885 236Q893 235 901 237T906 239M885 236Q882 238 882 243T886 252M885 236Q883 239 881 243T876 261M895 275Q901 275 902 274T914 273M895 275Q889 279 888 286T891 302M891 302Q895 297 896 295T908 296M891 302Q890 308 893 313T895 327M892 338Q897 343 896 346T904 350M892 338Q889 344 888 351T894 358M894 358Q904 361 910 364T918 363M894 358Q896 360 892 366T896 382M896 382Q903 382 904 388T912 383M896 382Q893 387 896 393T886 402M896 382Q903 388 906 390T913 404M886 402Q891 404 901 402T913 404M888 431Q890 438 893 439T895 452M895 452Q901 452 904 448T906 445M895 452Q895 454 898 454T893 465M895 452Q899 455 905 463T915 465M908 25Q911 27 913 29T926 34M908 25Q907 32 904 35T910 55M908 25Q913 29 917 36T927 48M910 55Q911 49 915 46T927 48M910 55Q914 58 919 61T918 64M918 64Q917 73 913 85T918 97M918 97Q916 102 917 108T910 115M910 115Q911 110 917 108T926 112M910 115Q912 116 915 117T915 128M915 128Q912 132 911 141T913 161M913 161Q914 155 917 154T928 150M905 199Q912 196 917 195T937 198M905 199Q908 206 906 215T911 223M911 223Q906 227 903 235T906 239M906 239Q906 248 906 254T905 264M905 264Q905 271 907 272T914 273M905 264Q907 267 904 268T895 275M908 296Q907 299 907 305T913 324M913 324Q915 324 919 325T928 325M913 324Q913 332 909 339T904 350M904 350Q916 350 925 349T939 343M918 363Q916 372 910 377T912 383M912 383Q918 381 925 378T935 381M912 383Q915 389 917 390T913 404M913 404Q913 402 919 405T936 405M913 404Q917 407 927 412T933 423M910 431Q913 428 916 427T933 423M910 431Q909 438 904 442T906 445M926 34Q928 39 926 41T927 48M929 66Q926 71 929 79T930 92M930 92Q932 100 932 104T926 112M926 112Q924 118 922 118T925 127M925 127Q927 130 930 137T928 150M925 127Q921 135 922 147T913 161M928 150Q929 157 924 165T930 172M928 150Q923 160 924 170T917 181M930 172Q937 170 941 167T956 171M932 221Q934 220 938 220T946 214M935 235Q935 238 940 238T951 233M935 235Q931 241 932 248T934 263M934 263Q932 270 930 275T933 284M934 307Q938 308 947 305T958 301M934 307Q939 314 943 320T954 328M939 343Q941 343 941 348T946 341M939 343Q941 347 941 349T938 358M938 358Q942 356 945 357T951 362M938 358Q937 362 940 367T935 381M938 358Q932 361 927 365T912 383M935 381Q936 377 942 375T952 378M935 381Q936 389 939 392T936 405M936 405Q941 406 943 411T956 413M936 405Q938 408 938 413T949 422M934 471Q940 472 942 467T949 473M947 25Q951 31 957 32T969 29M947 25Q948 28 954 35T960 45M960 45Q960 52 958 55T954 73M954 73Q955 73 960 69T968 77M954 73Q951 76 951 81T953 92M953 92Q951 99 951 103T960 116M949 132Q955 127 961 128T969 131M956 171Q959 172 965 171T967 170M956 171Q952 177 952 181T956 195M946 214Q951 223 959 231T973 245M951 233Q958 238 967 240T973 245M956 266Q961 267 964 267T972 262M956 266Q960 270 961 275T959 282M959 282Q963 281 962 279T970 280M958 301Q963 296 963 296T969 295M958 301Q962 308 961 318T954 328M946 341Q948 343 955 345T972 345M946 341Q947 347 948 355T951 362M951 362Q959 359 968 360T975 368M951 362Q949 367 948 375T935 381M952 378Q960 380 968 376T974 379M952 378Q950 383 953 390T956 413M952 378Q946 381 946 387T936 405M956 413Q957 420 956 423T949 422M949 422Q950 432 953 440T951 452M951 452Q956 447 965 446T974 444M951 452Q952 462 949 467T949 473M969 29Q969 32 966 38T960 45M970 280Q968 286 962 289T958 301" fill="none" stroke="#b6b8d8" stroke-width="1.15"/>
<path d="M960 45Q967 47 977 52M960 116Q970 114 979 114M952 157Q964 153 979 153M956 413Q966 409 977 405M969 29Q983 28 992 22M969 29Q974 40 977 52M968 77Q982 77 1000 74M968 77Q971 83 979 91M968 77Q983 86 1001 96M979 91Q988 91 1001 96M979 91Q978 102 979 114M969 131Q979 136 988 137M969 131Q983 141 998 150M979 153Q986 163 995 172M967 170Q967 186 969 197M969 197Q983 211 999 223M976 216Q986 222 999 223M976 216Q976 230 973 245M973 245Q988 240 999 236M973 245Q972 254 972 262M972 262Q982 263 993 266M972 262Q969 273 970 280M969 295Q972 304 972 316M972 316Q985 319 999 319M972 316Q972 331 972 345M972 345Q974 357 975 368M975 368Q984 366 989 361M975 368Q976 373 974 379M974 379Q985 383 997 391M974 379Q976 394 977 405M977 405Q989 407 1002 406M977 405Q978 420 978 434M978 434Q977 437 974 444M978 434Q983 438 992 444M974 444Q985 443 992 444M974 444Q973 456 972 469M972 469Q983 472 991 473M992 22Q1003 26 1011 29M992 22Q995 36 993 51M993 51Q998 63 1000 74M1000 74Q1012 82 1023 91M994 114Q989 127 988 137M988 137Q992 142 998 150M988 137Q982 147 979 153M998 150Q1009 150 1021 152M995 172Q998 183 999 195M999 223Q1007 219 1012 214M999 223Q997 231 999 236M999 223Q1005 228 1012 233M999 223Q988 234 973 245M999 236Q1009 245 1019 252M993 266Q995 272 1001 275M1001 275Q1007 278 1017 281M993 305Q1008 305 1020 302M999 319Q1012 319 1022 319M999 319Q996 334 994 350M989 361Q994 378 997 391M989 361Q982 371 974 379M997 391Q1002 397 1002 406M997 391Q988 399 977 405M1002 406Q1009 403 1021 402M992 444Q991 459 991 473M1022 45Q1019 58 1018 70M1018 70Q1026 73 1038 71M1018 70Q1021 80 1023 91M1018 70Q1010 84 1001 96M1023 91Q1028 93 1034 94M1023 91Q1018 103 1016 118M1023 91Q1030 103 1040 118M1016 118Q1028 117 1040 118M1016 118Q1002 126 988 137M1020 128Q1031 129 1038 130M1020 128Q1021 140 1021 152M1016 195Q1012 203 1012 214M1012 233Q1018 244 1019 252M1019 252Q1030 255 1042 257M1017 281Q1028 282 1037 284M1017 281Q1018 290 1020 302M1020 302Q1031 300 1044 297M1020 302Q1019 309 1022 319M1022 319Q1029 323 1040 326M1022 319Q1031 329 1041 341M1022 319Q1010 335 994 350M1010 344Q1009 358 1013 371M1013 371Q1018 381 1022 388M1013 371Q1024 379 1033 385M1022 388Q1032 402 1039 411M1021 402Q1021 416 1016 425M1021 402Q1009 416 999 434M1016 425Q1025 428 1033 429M1016 425Q1016 438 1014 446M1016 425Q1022 433 1033 443M1014 446Q1014 458 1016 471M1030 29Q1047 30 1060 35M1031 56Q1041 54 1053 49M1038 71Q1046 68 1058 66M1034 94Q1050 88 1064 86M1034 94Q1039 107 1040 118M1040 118Q1049 113 1054 105M1040 118Q1039 122 1038 130M1038 130Q1048 134 1060 135M1038 130Q1038 140 1039 147M1038 130Q1030 143 1021 152M1041 172Q1050 170 1060 171M1041 172Q1040 182 1040 190M1040 190Q1040 200 1038 212M1038 212Q1046 217 1055 222M1030 234Q1041 237 1052 236M1030 234Q1035 245 1042 257M1042 257Q1049 260 1057 266M1042 257Q1049 267 1055 278M1037 284Q1039 293 1044 297M1044 297Q1041 313 1040 326M1040 326Q1047 325 1053 327M1041 341Q1048 343 1056 344M1037 368Q1051 366 1064 361M1039 411Q1049 409 1059 405M1033 429Q1046 427 1060 424M1037 471Q1047 472 1060 470M1053 49Q1054 56 1058 66M1058 66Q1068 71 1079 75M1058 66Q1061 74 1064 86M1064 86Q1073 88 1079 90M1064 86Q1060 95 1054 105M1054 105Q1059 120 1060 135M1054 160Q1056 165 1060 171M1060 171Q1072 174 1086 182M1060 171Q1062 186 1065 201M1065 201Q1071 198 1078 192M1065 201Q1062 213 1055 222M1065 201Q1076 209 1086 214M1065 201Q1050 208 1038 212M1055 222Q1069 218 1086 214M1055 222Q1054 227 1052 236M1057 266Q1070 266 1079 262M1057 266Q1057 271 1055 278M1055 278Q1065 276 1073 278M1055 278Q1052 293 1054 306M1053 327Q1062 327 1074 325M1056 344Q1068 355 1079 369M1064 361Q1062 375 1058 387M1058 387Q1068 390 1079 392M1058 387Q1059 394 1059 405M1059 405Q1060 415 1060 424M1059 405Q1071 418 1079 429M1053 441Q1067 439 1077 442M1053 441Q1069 457 1085 474M1060 470Q1074 472 1085 474M1083 23Q1092 27 1104 33M1083 23Q1084 36 1082 48M1082 48Q1089 52 1101 56M1079 75Q1088 77 1100 77M1079 75Q1079 84 1079 90M1079 90Q1085 91 1094 89M1079 90Q1082 97 1081 107M1079 90Q1067 95 1054 105M1085 133Q1093 136 1100 137M1085 133Q1070 148 1054 160M1072 154Q1084 154 1098 157M1072 154Q1081 168 1086 182M1072 154Q1089 165 1104 177M1086 182Q1097 178 1104 177M1086 182Q1081 186 1078 192M1078 192Q1086 194 1093 198M1086 214Q1080 226 1072 234M1072 234Q1084 240 1094 242M1072 234Q1074 249 1079 262M1072 234Q1081 249 1095 262M1082 299Q1094 303 1103 307M1082 299Q1079 313 1074 325M1074 325Q1082 326 1094 324M1074 325Q1078 335 1078 346M1074 325Q1063 334 1056 344M1078 346Q1089 343 1098 345M1078 346Q1077 358 1079 369M1079 369Q1087 362 1094 357M1079 369Q1078 378 1079 392M1079 392Q1088 393 1094 391M1084 409Q1090 407 1100 408M1077 442Q1091 444 1106 443M1077 442Q1079 460 1085 474M1077 442Q1091 460 1104 474M1104 33Q1116 30 1128 29M1104 33Q1102 47 1101 56M1101 56Q1110 51 1123 47M1100 77Q1112 74 1125 67M1100 77Q1095 82 1094 89M1094 89Q1113 105 1128 116M1101 117Q1116 116 1128 116M1100 137Q1107 131 1115 128M1100 137Q1101 147 1098 157M1100 137Q1111 143 1119 152M1098 157Q1110 156 1119 152M1098 157Q1101 168 1104 177M1098 157Q1111 165 1124 171M1104 177Q1115 176 1124 171M1093 198Q1110 197 1122 195M1093 198Q1092 205 1093 214M1093 198Q1090 207 1086 214M1093 214Q1094 228 1094 242M1094 242Q1108 246 1120 245M1094 276Q1098 294 1103 307M1103 307Q1109 306 1115 303M1103 307Q1099 314 1094 324M1094 324Q1095 334 1098 345M1098 345Q1113 345 1124 343M1094 357Q1093 376 1094 391M1094 391Q1087 402 1084 409M1100 408Q1112 408 1125 412M1095 430Q1111 428 1126 425M1095 430Q1111 434 1126 443M1106 443Q1106 457 1104 474M1104 474Q1114 472 1122 468M1125 67Q1122 81 1123 93M1125 67Q1109 80 1094 89M1124 171Q1131 172 1136 174M1124 171Q1125 182 1122 195M1122 195Q1133 192 1143 191M1122 195Q1122 206 1118 219M1120 245Q1117 253 1115 265M1120 245Q1108 255 1095 262M1115 265Q1120 271 1123 279M1123 279Q1134 274 1147 274M1123 279Q1118 292 1115 303M1115 303Q1126 302 1140 302M1124 343Q1121 356 1115 369M1124 343Q1110 351 1094 357M1115 369Q1118 379 1118 385M1115 369Q1103 382 1094 391M1118 385Q1132 384 1146 384M1118 385Q1119 397 1125 412M1126 425Q1127 432 1126 443M1126 425Q1116 433 1106 443M1126 443Q1122 457 1122 468M1147 31Q1160 30 1169 32M1144 54Q1158 51 1170 45M1144 54Q1144 60 1140 69M1140 69Q1153 71 1170 69M1140 69Q1137 79 1136 89M1140 69Q1129 80 1123 93M1136 89Q1148 91 1161 90M1136 89Q1137 103 1137 115M1137 115Q1155 118 1169 119M1137 115Q1138 129 1136 139M1137 115Q1154 123 1168 130M1136 139Q1138 148 1144 153M1136 139Q1146 146 1157 150M1144 153Q1150 150 1157 150M1144 153Q1135 160 1124 171M1136 174Q1149 176 1166 178M1136 174Q1137 184 1143 191M1149 215Q1160 216 1170 215M1141 235Q1147 238 1156 237M1140 256Q1149 258 1157 264M1140 256Q1143 263 1147 274M1147 274Q1144 289 1140 302M1147 274Q1130 288 1115 303M1140 302Q1142 310 1142 319M1142 319Q1141 328 1142 336M1142 336Q1138 350 1139 363M1139 363Q1128 375 1118 385M1146 384Q1159 387 1170 392M1141 408Q1151 415 1157 420M1139 428Q1149 426 1157 420M1139 428Q1140 440 1137 450M1137 450Q1152 445 1168 444M1169 32Q1178 31 1191 27M1169 32Q1171 40 1170 45M1170 45Q1172 46 1179 45M1170 45Q1169 59 1170 69M1161 90Q1166 103 1169 119M1169 119Q1170 123 1168 130M1169 119Q1177 129 1185 138M1168 130Q1176 135 1185 138M1168 130Q1164 138 1157 150M1157 150Q1171 150 1184 147M1166 178Q1162 183 1156 189M1156 189Q1168 196 1183 201M1170 215Q1176 214 1183 215M1156 237Q1155 249 1157 264M1157 264Q1160 272 1163 282M1163 282Q1166 291 1169 295M1169 295Q1164 313 1159 326M1159 326Q1174 323 1185 320M1159 326Q1161 332 1165 342M1161 366Q1169 367 1178 366M1161 366Q1166 377 1170 392M1170 392Q1178 385 1191 382M1170 392Q1168 401 1169 413M1169 413Q1177 408 1181 403M1157 420Q1173 425 1185 434M1168 444Q1167 456 1163 469M1163 469Q1179 469 1190 466M1191 27Q1185 37 1179 45M1179 45Q1189 42 1198 42M1179 45Q1186 60 1190 75M1179 98Q1181 108 1182 115M1184 147Q1191 149 1198 154M1184 147Q1183 165 1185 180M1184 147Q1195 158 1205 172M1184 147Q1176 163 1166 178M1185 180Q1195 176 1205 172M1183 201Q1184 209 1183 215M1183 201Q1177 207 1170 215M1183 215Q1190 213 1198 211M1183 215Q1183 224 1182 234M1182 234Q1183 251 1184 266M1182 234Q1170 250 1157 264M1184 266Q1194 260 1208 258M1184 266Q1185 277 1185 284M1184 266Q1196 273 1206 277M1185 284Q1197 282 1206 277M1179 299Q1192 310 1204 321M1185 320Q1196 319 1204 321M1177 349Q1194 343 1211 338M1178 366Q1174 378 1170 392M1191 382Q1197 385 1206 385M1191 382Q1187 391 1181 403M1181 403Q1184 420 1185 434M1185 434Q1193 430 1201 425M1185 434Q1183 441 1179 444M1179 444Q1190 442 1201 442M1208 31Q1218 27 1230 26M1208 31Q1201 35 1198 42M1208 31Q1219 40 1233 45M1198 42Q1216 43 1233 45M1199 112Q1211 112 1227 111M1199 112Q1199 121 1199 130M1199 130Q1198 144 1198 154M1198 154Q1212 157 1227 161M1198 154Q1203 162 1205 172M1198 154Q1193 167 1185 180M1205 172Q1213 178 1220 182M1201 189Q1217 192 1233 195M1201 189Q1199 199 1198 211M1212 231Q1223 231 1233 231M1208 258Q1220 263 1230 263M1208 258Q1209 266 1206 277M1208 258Q1197 272 1185 284M1206 277Q1207 292 1212 306M1212 306Q1209 315 1204 321M1204 321Q1216 322 1226 319M1211 338Q1213 351 1211 366M1211 366Q1218 370 1222 370M1211 366Q1209 374 1206 385M1206 385Q1214 388 1219 390M1206 385Q1204 391 1206 400M1206 400Q1197 419 1185 434M1201 425Q1199 432 1201 442M1201 442Q1212 449 1222 453M1208 468Q1221 470 1231 476M1233 45Q1239 59 1245 72M1226 69Q1235 84 1245 96M1230 85Q1238 90 1245 96M1230 85Q1229 99 1227 111M1227 111Q1229 119 1228 129M1227 111Q1241 123 1253 137M1228 129Q1215 142 1198 154M1227 161Q1225 173 1220 182M1220 182Q1230 178 1241 173M1220 182Q1226 187 1233 195M1220 217Q1224 223 1233 231M1233 231Q1244 237 1253 244M1230 263Q1225 273 1220 282M1220 282Q1233 281 1244 279M1220 282Q1219 289 1221 295M1226 319Q1231 317 1240 316M1226 319Q1227 331 1228 343M1228 343Q1224 358 1222 370M1222 370Q1220 381 1219 390M1219 390Q1220 401 1223 412M1228 426Q1238 426 1252 426M1228 426Q1226 440 1222 453M1222 453Q1233 458 1243 466M1245 72Q1238 78 1230 85M1245 96Q1247 107 1248 118M1241 173Q1243 183 1242 193M1242 193Q1246 203 1251 211M1251 255Q1246 269 1244 279M1252 336Q1254 346 1253 359M1253 359Q1255 372 1254 385M1254 385Q1240 398 1223 412" fill="none" stroke="#c3c4de" stroke-width="1.05"/>
<path d="M1158.0 174.0 C1153.7 178.1 1142.6 185.0 1132.0 198.4 C1121.4 211.8 1108.5 236.1 1094.4 254.7 C1080.3 273.3 1061.2 293.8 1047.5 310.0 C1033.8 326.2 1017.9 345.0 1012.0 352.0" fill="none" stroke="#b6b6d2" stroke-width="1.9"/>
<path d="M1207.0 310.0 C1203.9 313.1 1193.9 320.1 1188.3 328.8 C1182.7 337.6 1179.9 352.5 1173.3 362.5 C1166.7 372.5 1155.8 381.3 1148.9 388.8 C1142.0 396.3 1137.0 398.4 1132.0 407.6 C1127.0 416.8 1121.0 437.9 1118.8 444.0" fill="none" stroke="#b6b6d2" stroke-width="1.9"/>
<path d="M1172.9 161.9 L1226.0 144.0" fill="none" stroke="#b6b6d2" stroke-width="1.9"/>
<path d="M587.0 388.0 C592.5 388.7 607.8 392.0 620.0 392.0 C632.2 392.0 646.7 386.7 660.0 388.0 C673.3 389.3 686.7 394.7 700.0 400.0 C713.3 405.3 726.7 414.0 740.0 420.0 C753.3 426.0 765.0 432.0 780.0 436.0 C795.0 440.0 821.7 442.7 830.0 444.0" fill="none" stroke="#b6b6d2" stroke-width="1.9"/>
<path d="M1012.0 40.0 C1012.0 46.7 1013.8 68.3 1012.0 80.0 C1010.2 91.7 1004.3 101.7 1001.0 110.0 C997.7 118.3 994.8 122.5 992.0 130.0 C989.2 137.5 986.2 147.7 984.0 155.0 C981.8 162.3 980.3 165.2 979.0 174.0 C977.7 182.8 977.5 193.5 976.0 207.8 C974.5 222.1 972.3 243.0 970.0 260.0 C967.7 277.0 963.7 293.3 962.0 310.0 C960.3 326.7 960.7 337.7 960.0 360.0 C959.3 382.3 958.3 430.0 958.0 444.0" fill="none" stroke="#b6b6d2" stroke-width="1.9"/>
<path d="M1012.0 330.0 C1018.0 328.7 1033.5 322.7 1048.0 322.0 C1062.5 321.3 1090.5 325.3 1099.0 326.0" fill="none" stroke="#b6b6d2" stroke-width="1.9"/>
<path d="M1130.0 444.0 L1132.0 407.0" fill="none" stroke="#b6b6d2" stroke-width="1.9"/>
<path d="M742.0 40.0 C741.5 43.3 740.2 53.7 739.0 60.0 C737.8 66.3 737.8 72.7 735.0 78.0 C732.2 83.3 724.3 86.3 722.0 92.0 C719.7 97.7 722.7 107.7 721.0 112.0 C719.3 116.3 715.5 115.7 712.0 118.0 C708.5 120.3 703.7 123.3 700.0 126.0 C696.3 128.7 693.3 130.7 690.0 134.0 C686.7 137.3 683.7 143.0 680.0 146.0 C676.3 149.0 673.0 150.0 668.0 152.0 C663.0 154.0 654.7 155.7 650.0 158.0 C645.3 160.3 643.7 164.7 640.0 166.0 C636.3 167.3 632.7 167.7 628.0 166.0 C623.3 164.3 617.0 160.3 612.0 156.0 C607.0 151.7 601.7 144.7 598.0 140.0 C594.3 135.3 591.3 130.0 590.0 128.0" fill="none" stroke="#eba888" stroke-width="1.6" stroke-dasharray="7 3"/>
<path d="M1040.0 40.0 C1038.1 43.7 1030.7 56.5 1028.8 62.4 C1026.9 68.3 1030.7 69.2 1028.8 75.5 C1026.9 81.8 1019.7 92.8 1017.5 100.0 C1015.3 107.2 1017.2 114.0 1015.6 118.7 C1014.0 123.4 1009.3 126.5 1008.0 128.0" fill="none" stroke="#eba888" stroke-width="1.6" stroke-dasharray="7 3"/>
<path d="M800.0 45.0 C803.3 45.8 811.7 49.8 820.0 50.0 C828.3 50.2 840.0 47.0 850.0 46.0 C860.0 45.0 871.7 43.0 880.0 44.0 C888.3 45.0 891.7 51.0 900.0 52.0 C908.3 53.0 921.7 47.7 930.0 50.0 C938.3 52.3 944.2 61.3 950.0 66.0 C955.8 70.7 961.3 73.0 965.0 78.0 C968.7 83.0 971.5 90.3 972.0 96.0 C972.5 101.7 967.5 106.3 968.0 112.0 C968.5 117.7 971.3 124.7 975.0 130.0 C978.7 135.3 984.2 140.7 990.0 144.0 C995.8 147.3 1006.7 149.0 1010.0 150.0" fill="none" stroke="#eba888" stroke-width="1.6" stroke-dasharray="7 3"/>
<path d="M1011.7 36.0 C1012.6 38.7 1015.6 47.2 1017.0 52.0 C1018.4 56.8 1019.3 60.8 1020.0 64.5 C1020.7 68.2 1022.0 70.1 1021.4 74.0 C1020.8 77.9 1018.6 82.5 1016.5 88.0 C1014.4 93.5 1011.4 100.0 1009.0 107.0 C1006.6 114.0 1003.6 122.8 1002.0 130.0 C1000.4 137.2 1000.0 142.7 999.6 150.0 C999.2 157.3 1000.7 163.8 999.6 174.0 C998.5 184.2 996.1 201.2 993.0 211.5 C989.9 221.8 983.5 227.6 980.8 236.0 C978.1 244.4 979.2 254.1 977.0 262.2 C974.8 270.3 969.6 276.7 967.7 284.7 C965.8 292.7 964.5 302.6 965.8 310.0 C967.0 317.4 973.6 321.6 975.2 328.8 C976.8 336.0 977.4 345.4 975.2 353.2 C973.0 361.0 964.0 369.8 962.0 375.7 C960.0 381.6 959.7 383.5 963.0 388.8 C966.3 394.1 980.2 400.7 981.8 407.6 C983.4 414.5 974.1 423.9 972.4 430.0 C970.7 436.1 971.6 441.7 971.5 444.0" fill="none" stroke="#8486b4" stroke-width="3.2" stroke-linecap="round"/>
<path d="M966.8 403.8 L968.6 444.0" fill="none" stroke="#8486b4" stroke-width="3.2" stroke-linecap="round"/>
<path d="M981.8 407.6 C986.8 409.5 1005.4 415.1 1012.0 418.8 C1018.6 422.5 1017.5 427.6 1021.3 430.0 C1025.1 432.4 1029.0 433.9 1035.0 433.0 C1041.0 432.1 1049.6 424.7 1057.0 424.5 C1064.4 424.3 1074.1 428.8 1079.4 432.0 C1084.7 435.2 1087.2 442.0 1088.8 444.0" fill="none" stroke="#8486b4" stroke-width="3.2" stroke-linecap="round"/>
<path d="M1028.0 36.0 C1029.3 37.3 1033.2 42.2 1036.0 44.0 C1038.8 45.8 1041.8 46.5 1044.8 46.5 C1047.8 46.5 1051.3 45.8 1054.0 44.0 C1056.7 42.2 1059.8 37.3 1061.0 36.0" fill="none" stroke="#8486b4" stroke-width="3.2" stroke-linecap="round"/>
<path d="M1150.0 36.0 C1155.0 37.3 1167.3 42.3 1180.0 44.0 C1192.7 45.7 1218.3 46.0 1226.0 46.4" fill="none" stroke="#8486b4" stroke-width="3.2" stroke-linecap="round"/>
<rect x="662.3" y="42.4" width="3.2" height="3.2" fill="#fff" stroke="#85879c" stroke-width="0.9"/>
<rect x="740.1" y="42.4" width="3.2" height="3.2" fill="#fff" stroke="#85879c" stroke-width="0.9"/>
<rect x="803.4" y="51.8" width="3.2" height="3.2" fill="#fff" stroke="#85879c" stroke-width="0.9"/>
<rect x="695.4" y="70.2" width="3.2" height="3.2" fill="#fff" stroke="#85879c" stroke-width="0.9"/>
<rect x="751.4" y="68.4" width="3.2" height="3.2" fill="#fff" stroke="#85879c" stroke-width="0.9"/>
<rect x="613.1" y="80.4" width="3.2" height="3.2" fill="#fff" stroke="#85879c" stroke-width="0.9"/>
<rect x="660.4" y="111.1" width="3.2" height="3.2" fill="#fff" stroke="#85879c" stroke-width="0.9"/>
<rect x="703.0" y="122.4" width="3.2" height="3.2" fill="#fff" stroke="#85879c" stroke-width="0.9"/>
<rect x="771.1" y="108.1" width="3.2" height="3.2" fill="#fff" stroke="#85879c" stroke-width="0.9"/>
<rect x="594.2" y="133.4" width="3.2" height="3.2" fill="#fff" stroke="#85879c" stroke-width="0.9"/>
<rect x="756.4" y="140.0" width="3.2" height="3.2" fill="#fff" stroke="#85879c" stroke-width="0.9"/>
<rect x="675.4" y="149.4" width="3.2" height="3.2" fill="#fff" stroke="#85879c" stroke-width="0.9"/>
<rect x="905.4" y="47.3" width="3.2" height="3.2" fill="#fff" stroke="#85879c" stroke-width="0.9"/>
<rect x="809.4" y="79.2" width="3.2" height="3.2" fill="#fff" stroke="#85879c" stroke-width="0.9"/>
<rect x="895.4" y="76.7" width="3.2" height="3.2" fill="#fff" stroke="#85879c" stroke-width="0.9"/>
<rect x="965.2" y="86.1" width="3.2" height="3.2" fill="#fff" stroke="#85879c" stroke-width="0.9"/>
<rect x="916.4" y="103.0" width="3.2" height="3.2" fill="#fff" stroke="#85879c" stroke-width="0.9"/>
<rect x="871.0" y="108.1" width="3.2" height="3.2" fill="#fff" stroke="#85879c" stroke-width="0.9"/>
<rect x="832.4" y="113.0" width="3.2" height="3.2" fill="#fff" stroke="#85879c" stroke-width="0.9"/>
<rect x="965.2" y="111.1" width="3.2" height="3.2" fill="#fff" stroke="#85879c" stroke-width="0.9"/>
<rect x="913.2" y="143.0" width="3.2" height="3.2" fill="#fff" stroke="#85879c" stroke-width="0.9"/>
<rect x="863.3" y="149.0" width="3.2" height="3.2" fill="#fff" stroke="#85879c" stroke-width="0.9"/>
<rect x="1017.4" y="45.2" width="3.2" height="3.2" fill="#fff" stroke="#85879c" stroke-width="0.9"/>
<rect x="1106.9" y="43.5" width="3.2" height="3.2" fill="#fff" stroke="#85879c" stroke-width="0.9"/>
<rect x="1157.6" y="40.2" width="3.2" height="3.2" fill="#fff" stroke="#85879c" stroke-width="0.9"/>
<rect x="1197.0" y="42.4" width="3.2" height="3.2" fill="#fff" stroke="#85879c" stroke-width="0.9"/>
<rect x="1038.4" y="71.1" width="3.2" height="3.2" fill="#fff" stroke="#85879c" stroke-width="0.9"/>
<rect x="1100.4" y="84.3" width="3.2" height="3.2" fill="#fff" stroke="#85879c" stroke-width="0.9"/>
<rect x="1167.4" y="82.9" width="3.2" height="3.2" fill="#fff" stroke="#85879c" stroke-width="0.9"/>
<rect x="1210.1" y="77.1" width="3.2" height="3.2" fill="#fff" stroke="#85879c" stroke-width="0.9"/>
<rect x="1044.4" y="111.1" width="3.2" height="3.2" fill="#fff" stroke="#85879c" stroke-width="0.9"/>
<rect x="1161.4" y="113.9" width="3.2" height="3.2" fill="#fff" stroke="#85879c" stroke-width="0.9"/>
<rect x="1217.3" y="123.1" width="3.2" height="3.2" fill="#fff" stroke="#85879c" stroke-width="0.9"/>
<rect x="1100.4" y="134.9" width="3.2" height="3.2" fill="#fff" stroke="#85879c" stroke-width="0.9"/>
<rect x="1012.2" y="154.2" width="3.2" height="3.2" fill="#fff" stroke="#85879c" stroke-width="0.9"/>
<rect x="1052.1" y="150.9" width="3.2" height="3.2" fill="#fff" stroke="#85879c" stroke-width="0.9"/>
<rect x="1171.3" y="160.3" width="3.2" height="3.2" fill="#fff" stroke="#85879c" stroke-width="0.9"/>
<rect x="690.4" y="200.2" width="3.2" height="3.2" fill="#fff" stroke="#85879c" stroke-width="0.9"/>
<rect x="767.4" y="202.0" width="3.2" height="3.2" fill="#fff" stroke="#85879c" stroke-width="0.9"/>
<rect x="657.2" y="232.1" width="3.2" height="3.2" fill="#fff" stroke="#85879c" stroke-width="0.9"/>
<rect x="717.3" y="237.1" width="3.2" height="3.2" fill="#fff" stroke="#85879c" stroke-width="0.9"/>
<rect x="721.4" y="270.0" width="3.2" height="3.2" fill="#fff" stroke="#85879c" stroke-width="0.9"/>
<rect x="622.3" y="274.3" width="3.2" height="3.2" fill="#fff" stroke="#85879c" stroke-width="0.9"/>
<rect x="782.4" y="291.0" width="3.2" height="3.2" fill="#fff" stroke="#85879c" stroke-width="0.9"/>
<rect x="850.7" y="184.0" width="3.2" height="3.2" fill="#fff" stroke="#85879c" stroke-width="0.9"/>
<rect x="898.2" y="177.1" width="3.2" height="3.2" fill="#fff" stroke="#85879c" stroke-width="0.9"/>
<rect x="963.3" y="178.0" width="3.2" height="3.2" fill="#fff" stroke="#85879c" stroke-width="0.9"/>
<rect x="850.7" y="212.7" width="3.2" height="3.2" fill="#fff" stroke="#85879c" stroke-width="0.9"/>
<rect x="896.3" y="212.2" width="3.2" height="3.2" fill="#fff" stroke="#85879c" stroke-width="0.9"/>
<rect x="981.1" y="214.1" width="3.2" height="3.2" fill="#fff" stroke="#85879c" stroke-width="0.9"/>
<rect x="955.2" y="247.1" width="3.2" height="3.2" fill="#fff" stroke="#85879c" stroke-width="0.9"/>
<rect x="997.1" y="251.2" width="3.2" height="3.2" fill="#fff" stroke="#85879c" stroke-width="0.9"/>
<rect x="944.1" y="277.9" width="3.2" height="3.2" fill="#fff" stroke="#85879c" stroke-width="0.9"/>
<rect x="994.2" y="289.1" width="3.2" height="3.2" fill="#fff" stroke="#85879c" stroke-width="0.9"/>
<rect x="880.2" y="299.4" width="3.2" height="3.2" fill="#fff" stroke="#85879c" stroke-width="0.9"/>
<rect x="1025.3" y="185.2" width="3.2" height="3.2" fill="#fff" stroke="#85879c" stroke-width="0.9"/>
<rect x="1094.4" y="179.4" width="3.2" height="3.2" fill="#fff" stroke="#85879c" stroke-width="0.9"/>
<rect x="1210.1" y="196.2" width="3.2" height="3.2" fill="#fff" stroke="#85879c" stroke-width="0.9"/>
<rect x="1156.3" y="206.2" width="3.2" height="3.2" fill="#fff" stroke="#85879c" stroke-width="0.9"/>
<rect x="1098.4" y="211.2" width="3.2" height="3.2" fill="#fff" stroke="#85879c" stroke-width="0.9"/>
<rect x="1169.2" y="232.1" width="3.2" height="3.2" fill="#fff" stroke="#85879c" stroke-width="0.9"/>
<rect x="1051.6" y="245.0" width="3.2" height="3.2" fill="#fff" stroke="#85879c" stroke-width="0.9"/>
<rect x="1113.4" y="259.3" width="3.2" height="3.2" fill="#fff" stroke="#85879c" stroke-width="0.9"/>
<rect x="1050.2" y="271.9" width="3.2" height="3.2" fill="#fff" stroke="#85879c" stroke-width="0.9"/>
<rect x="1107.9" y="291.9" width="3.2" height="3.2" fill="#fff" stroke="#85879c" stroke-width="0.9"/>
<rect x="1197.0" y="288.2" width="3.2" height="3.2" fill="#fff" stroke="#85879c" stroke-width="0.9"/>
<rect x="705.4" y="306.4" width="3.2" height="3.2" fill="#fff" stroke="#85879c" stroke-width="0.9"/>
<rect x="604.4" y="330.4" width="3.2" height="3.2" fill="#fff" stroke="#85879c" stroke-width="0.9"/>
<rect x="751.0" y="329.0" width="3.2" height="3.2" fill="#fff" stroke="#85879c" stroke-width="0.9"/>
<rect x="687.2" y="350.1" width="3.2" height="3.2" fill="#fff" stroke="#85879c" stroke-width="0.9"/>
<rect x="597.4" y="364.1" width="3.2" height="3.2" fill="#fff" stroke="#85879c" stroke-width="0.9"/>
<rect x="647.6" y="370.3" width="3.2" height="3.2" fill="#fff" stroke="#85879c" stroke-width="0.9"/>
<rect x="765.1" y="370.0" width="3.2" height="3.2" fill="#fff" stroke="#85879c" stroke-width="0.9"/>
<rect x="704.5" y="390.4" width="3.2" height="3.2" fill="#fff" stroke="#85879c" stroke-width="0.9"/>
<rect x="752.4" y="395.3" width="3.2" height="3.2" fill="#fff" stroke="#85879c" stroke-width="0.9"/>
<rect x="620.4" y="413.1" width="3.2" height="3.2" fill="#fff" stroke="#85879c" stroke-width="0.9"/>
<rect x="811.7" y="317.2" width="3.2" height="3.2" fill="#fff" stroke="#85879c" stroke-width="0.9"/>
<rect x="866.3" y="326.2" width="3.2" height="3.2" fill="#fff" stroke="#85879c" stroke-width="0.9"/>
<rect x="953.5" y="316.8" width="3.2" height="3.2" fill="#fff" stroke="#85879c" stroke-width="0.9"/>
<rect x="965.2" y="342.2" width="3.2" height="3.2" fill="#fff" stroke="#85879c" stroke-width="0.9"/>
<rect x="803.4" y="344.4" width="3.2" height="3.2" fill="#fff" stroke="#85879c" stroke-width="0.9"/>
<rect x="847.5" y="354.0" width="3.2" height="3.2" fill="#fff" stroke="#85879c" stroke-width="0.9"/>
<rect x="989.6" y="370.0" width="3.2" height="3.2" fill="#fff" stroke="#85879c" stroke-width="0.9"/>
<rect x="825.4" y="381.2" width="3.2" height="3.2" fill="#fff" stroke="#85879c" stroke-width="0.9"/>
<rect x="872.3" y="384.4" width="3.2" height="3.2" fill="#fff" stroke="#85879c" stroke-width="0.9"/>
<rect x="938.5" y="391.9" width="3.2" height="3.2" fill="#fff" stroke="#85879c" stroke-width="0.9"/>
<rect x="1001.8" y="403.2" width="3.2" height="3.2" fill="#fff" stroke="#85879c" stroke-width="0.9"/>
<rect x="870.4" y="427.9" width="3.2" height="3.2" fill="#fff" stroke="#85879c" stroke-width="0.9"/>
<rect x="932.3" y="426.2" width="3.2" height="3.2" fill="#fff" stroke="#85879c" stroke-width="0.9"/>
<rect x="1046.4" y="316.3" width="3.2" height="3.2" fill="#fff" stroke="#85879c" stroke-width="0.9"/>
<rect x="1097.4" y="320.2" width="3.2" height="3.2" fill="#fff" stroke="#85879c" stroke-width="0.9"/>
<rect x="1187.2" y="334.1" width="3.2" height="3.2" fill="#fff" stroke="#85879c" stroke-width="0.9"/>
<rect x="1106.4" y="347.2" width="3.2" height="3.2" fill="#fff" stroke="#85879c" stroke-width="0.9"/>
<rect x="1210.1" y="360.0" width="3.2" height="3.2" fill="#fff" stroke="#85879c" stroke-width="0.9"/>
<rect x="1060.4" y="392.3" width="3.2" height="3.2" fill="#fff" stroke="#85879c" stroke-width="0.9"/>
<rect x="1119.4" y="390.4" width="3.2" height="3.2" fill="#fff" stroke="#85879c" stroke-width="0.9"/>
<rect x="1053.4" y="421.6" width="3.2" height="3.2" fill="#fff" stroke="#85879c" stroke-width="0.9"/>
<rect x="1120.4" y="436.4" width="3.2" height="3.2" fill="#fff" stroke="#85879c" stroke-width="0.9"/>
<g font-size="10.4" fill="#303030" stroke="#fff" stroke-width="2.4" stroke-linejoin="round" paint-order="stroke" style="paint-order:stroke">
<text x="641.4" y="54.9" textLength="45.9" lengthAdjust="spacing">Les Croix</text>
<text x="721.5" y="54.5" textLength="41.8" lengthAdjust="spacing">La Barre</text>
<text x="783.0" y="64.0" textLength="44.5" lengthAdjust="spacing">La Plaine</text>
<text x="668.6" y="82.5" textLength="57.8" lengthAdjust="spacing">Les Brosses</text>
<text x="730.0" y="80.8" textLength="47.0" lengthAdjust="spacing">Le Pâquis</text>
<text x="581.0" y="92.8" textLength="85.3" lengthAdjust="spacing">Bois de la Grange</text>
<text x="635.7" y="124.3" textLength="53.1" lengthAdjust="spacing">Les Étangs</text>
<text x="688.3" y="134.6" textLength="33.7" lengthAdjust="spacing">Vernay</text>
<text x="745.5" y="121.5" textLength="55.4" lengthAdjust="spacing">Les Jolivets</text>
<text x="578.0" y="119.6" textLength="20.0" lengthAdjust="spacing">Bère</text>
<text x="588.8" y="145.9" textLength="37.5" lengthAdjust="spacing">Bouard</text>
<text x="729.0" y="152.5" textLength="57.0" lengthAdjust="spacing">Les Correux</text>
<text x="650.4" y="160.9" textLength="53.8" lengthAdjust="spacing">Barriquand</text>
<text x="829.4" y="47.4" textLength="45.0" lengthAdjust="spacing">Le Cornu</text>
<text x="878.2" y="59.6" textLength="58.5" lengthAdjust="spacing">Les Chapuis</text>
<text x="984.2" y="57.7" textLength="70.5" lengthAdjust="spacing">La Condemine</text>
<text x="794.0" y="91.1" textLength="34.8" lengthAdjust="spacing">Ruyère</text>
<text x="864.5" y="89.0" textLength="60.6" lengthAdjust="spacing">Montmartin</text>
<text x="950.4" y="98.4" textLength="33.8" lengthAdjust="spacing">Rizière</text>
<text x="901.1" y="114.9" textLength="34.1" lengthAdjust="spacing">Foretal</text>
<text x="848.2" y="120.6" textLength="50.1" lengthAdjust="spacing">La Combe</text>
<text x="818.0" y="125.3" textLength="26.4" lengthAdjust="spacing">Écrie</text>
<text x="939.6" y="122.8" textLength="55.4" lengthAdjust="spacing">Les Thorins</text>
<text x="887.0" y="155.3" textLength="56.9" lengthAdjust="spacing">La Gravelle</text>
<text x="850.0" y="160.9" textLength="30.4" lengthAdjust="spacing">Medry</text>
<text x="996.8" y="166.0" textLength="34.2" lengthAdjust="spacing">Le Port</text>
<text x="1082.2" y="55.8" textLength="53.2" lengthAdjust="spacing">Montagnat</text>
<text x="1148.9" y="53.0" textLength="21.0" lengthAdjust="spacing">L&#x27;Île</text>
<text x="1185.5" y="54.3" textLength="27.2" lengthAdjust="spacing">Loriol</text>
<text x="1016.6" y="84.0" textLength="47.8" lengthAdjust="spacing">Le Cornet</text>
<text x="1064.0" y="96.7" textLength="77.9" lengthAdjust="spacing">Les Mahollières</text>
<text x="1147.9" y="95.2" textLength="43.2" lengthAdjust="spacing">Peyssole</text>
<text x="1197.7" y="89.6" textLength="45.3" lengthAdjust="spacing">Tiranges</text>
<text x="1026.9" y="123.4" textLength="39.0" lengthAdjust="spacing">La Gare</text>
<text x="1143.6" y="126.2" textLength="39.4" lengthAdjust="spacing">Les Pins</text>
<text x="1197.7" y="135.6" textLength="45.3" lengthAdjust="spacing">Charavel</text>
<text x="1078.5" y="147.4" textLength="48.8" lengthAdjust="spacing">Bramafan</text>
<text x="1034.4" y="164.1" textLength="39.4" lengthAdjust="spacing">L&#x27;Épinet</text>
<text x="1154.5" y="172.7" textLength="37.5" lengthAdjust="spacing">Chassin</text>
<text x="1208.9" y="172.7" textLength="41.1" lengthAdjust="spacing">La Roche</text>
<text x="604.0" y="178.1" textLength="38.3" lengthAdjust="spacing">Chatelier</text>
<text x="727.1" y="183.4" textLength="66.3" lengthAdjust="spacing">La Crozillette</text>
<text x="610.0" y="204.0" textLength="32.9" lengthAdjust="spacing">Poilon</text>
<text x="656.4" y="212.5" textLength="71.8" lengthAdjust="spacing">Cime de Cours</text>
<text x="760.5" y="214.3" textLength="25.5" lengthAdjust="spacing">Peyre</text>
<text x="575.0" y="238.7" textLength="19.0" lengthAdjust="spacing">Lans</text>
<text x="640.4" y="244.0" textLength="37.9" lengthAdjust="spacing">Lamure</text>
<text x="693.3" y="249.0" textLength="52.2" lengthAdjust="spacing">La Tuilière</text>
<text x="749.3" y="264.5" textLength="95.9" lengthAdjust="spacing">La Croix du Marché</text>
<text x="700.5" y="281.9" textLength="45.9" lengthAdjust="spacing">Les Noirs</text>
<text x="595.8" y="286.6" textLength="57.2" lengthAdjust="spacing">Le Gabaron</text>
<text x="765.8" y="303.1" textLength="37.2" lengthAdjust="spacing">La Tour</text>
<text x="828.8" y="196.1" textLength="47.9" lengthAdjust="spacing">Lafayette</text>
<text x="875.2" y="189.0" textLength="50.3" lengthAdjust="spacing">La Plaigne</text>
<text x="939.0" y="190.5" textLength="52.7" lengthAdjust="spacing">Les Serves</text>
<text x="1003.0" y="198.4" textLength="49.2" lengthAdjust="spacing">Saint-Jean</text>
<text x="824.1" y="225.0" textLength="57.9" lengthAdjust="spacing">Vers l&#x27;Haye</text>
<text x="881.4" y="224.3" textLength="35.1" lengthAdjust="spacing">Saburin</text>
<text x="926.0" y="227.3" textLength="115.0" lengthAdjust="spacing">Belleville-en-Beaujolais</text>
<text x="933.0" y="259.4" textLength="47.8" lengthAdjust="spacing">Bois Bally</text>
<text x="981.8" y="262.2" textLength="35.2" lengthAdjust="spacing">Thiollet</text>
<text x="933.9" y="290.0" textLength="25.0" lengthAdjust="spacing">Nuits</text>
<text x="967.1" y="301.2" textLength="58.9" lengthAdjust="spacing">Le Bicheron</text>
<text x="865.1" y="310.6" textLength="34.1" lengthAdjust="spacing">Le Gay</text>
<text x="1076.0" y="191.5" textLength="41.9" lengthAdjust="spacing">Le Logis</text>
<text x="1184.1" y="207.8" textLength="60.9" lengthAdjust="spacing">Chantereine</text>
<text x="1139.1" y="218.1" textLength="38.9" lengthAdjust="spacing">Tambon</text>
<text x="1065.4" y="223.2" textLength="71.3" lengthAdjust="spacing">La Condamine</text>
<text x="1148.5" y="243.8" textLength="44.5" lengthAdjust="spacing">Les Brets</text>
<text x="1029.7" y="256.6" textLength="47.5" lengthAdjust="spacing">Tavernost</text>
<text x="1080.0" y="271.2" textLength="70.7" lengthAdjust="spacing">Grange Neuve</text>
<text x="1165.4" y="268.4" textLength="40.6" lengthAdjust="spacing">Bezenet</text>
<text x="1038.5" y="283.8" textLength="27.8" lengthAdjust="spacing">Villon</text>
<text x="1072.9" y="304.0" textLength="73.7" lengthAdjust="spacing">La Carronnière</text>
<text x="1181.1" y="300.1" textLength="36.8" lengthAdjust="spacing">Le Clou</text>
<text x="1214.5" y="264.0" textLength="17.5" lengthAdjust="spacing">Les</text>
<text x="614.5" y="317.1" textLength="49.9" lengthAdjust="spacing">Montellier</text>
<text x="690.7" y="320.3" textLength="33.8" lengthAdjust="spacing">Vienne</text>
<text x="597.6" y="342.3" textLength="38.1" lengthAdjust="spacing">orestier</text>
<text x="738.9" y="341.9" textLength="28.7" lengthAdjust="spacing">Avray</text>
<text x="783.0" y="356.9" textLength="44.9" lengthAdjust="spacing">Bergeron</text>
<text x="671.9" y="362.5" textLength="34.2" lengthAdjust="spacing">Vernay</text>
<text x="597.6" y="376.6" textLength="25.0" lengthAdjust="spacing">horay</text>
<text x="633.5" y="382.8" textLength="31.9" lengthAdjust="spacing">Sarron</text>
<text x="752.6" y="382.2" textLength="28.6" lengthAdjust="spacing">Souzy</text>
<text x="689.8" y="402.5" textLength="32.2" lengthAdjust="spacing">Silloux</text>
<text x="724.5" y="407.0" textLength="58.5" lengthAdjust="spacing">Le Perrussel</text>
<text x="602.5" y="425.4" textLength="33.5" lengthAdjust="spacing">Vernay</text>
<text x="791.0" y="329.3" textLength="41.6" lengthAdjust="spacing">Le Veru</text>
<text x="844.8" y="338.1" textLength="47.5" lengthAdjust="spacing">La Brosse</text>
<text x="931.5" y="329.3" textLength="47.5" lengthAdjust="spacing">Marietton</text>
<text x="912.7" y="354.7" textLength="109.5" lengthAdjust="spacing">Villefranche-sur-Saône</text>
<text x="834.1" y="366.3" textLength="31.9" lengthAdjust="spacing">Glaizé</text>
<text x="963.0" y="382.8" textLength="56.4" lengthAdjust="spacing">Chanteclair</text>
<text x="806.9" y="393.1" textLength="40.7" lengthAdjust="spacing">La Potte</text>
<text x="849.5" y="395.8" textLength="50.3" lengthAdjust="spacing">Marquison</text>
<text x="923.2" y="404.4" textLength="34.6" lengthAdjust="spacing">Graves</text>
<text x="981.8" y="414.7" textLength="45.5" lengthAdjust="spacing">Varennes</text>
<text x="851.4" y="439.9" textLength="41.6" lengthAdjust="spacing">Flacieux</text>
<text x="909.5" y="438.2" textLength="49.8" lengthAdjust="spacing">Montesuis</text>
<text x="1027.3" y="327.8" textLength="42.4" lengthAdjust="spacing">Fontaine</text>
<text x="1069.7" y="332.1" textLength="60.4" lengthAdjust="spacing">Chavagneux</text>
<text x="1165.4" y="346.6" textLength="48.2" lengthAdjust="spacing">Les Oures</text>
<text x="1080.4" y="358.8" textLength="57.8" lengthAdjust="spacing">Le Panneau</text>
<text x="1177.0" y="372.5" textLength="69.0" lengthAdjust="spacing">Charbonnières</text>
<text x="1032.9" y="403.8" textLength="59.3" lengthAdjust="spacing">En Pouilleux</text>
<text x="1098.2" y="402.3" textLength="46.5" lengthAdjust="spacing">Vernange</text>
<text x="1197.3" y="401.4" textLength="42.7" lengthAdjust="spacing">Le Chêne</text>
<text x="1031.0" y="433.5" textLength="49.0" lengthAdjust="spacing">Le Molard</text>
<text x="1173.6" y="432.0" textLength="43.4" lengthAdjust="spacing">Cordieux</text>
<text x="1100.0" y="452.0" textLength="50.0" lengthAdjust="spacing">Le Saint-Éloi</text>
<text x="1219.0" y="346.6" textLength="11.0" lengthAdjust="spacing">La</text>
<text x="1219.0" y="432.0" textLength="11.0" lengthAdjust="spacing">La</text>
</g>
<path d="M846.0 85.3 L841.0 85.5 L838.5 94.0 L837.2 98.9 L835.4 103.7 L831.7 112.0 L828.0 120.6 L823.0 123.4 L816.6 128.5 L813.2 133.1 L809.4 137.3 L805.0 141.0 L802.5 146.1 L799.0 150.6 L792.0 154.0 L785.0 158.0 L777.0 160.5 L770.5 168.0 L769.9 176.0 L770.5 183.0 L773.6 189.0 L775.0 195.0 L779.3 199.3 L777.8 202.1" fill="none" stroke="#0f9640" stroke-width="3.3" stroke-linejoin="round" stroke-linecap="round"/>
<path d="M781.2 224.7 L782.5 228.0 L782.0 232.2 L785.3 237.7 L789.6 242.5 L793.4 247.4 L796.2 252.8 L797.0 259.4" fill="none" stroke="#0f9640" stroke-width="3.3" stroke-linejoin="round" stroke-linecap="round"/>
<path d="M796.0 277.6 L793.4 286.6 L795.0 294.0 L800.0 301.6 L800.7 310.0 L801.0 316.3 L800.3 322.5 L800.7 328.8 L802.5 334.9 L804.4 341.0 L809.0 347.5 L808.5 357.0 L809.3 363.3 L812.0 369.0 L815.6 372.9 L819.3 376.8 L822.6 381.0 L826.8 384.3 L829.3 389.3 L833.5 392.6 L837.2 397.0 L840.6 401.5 L843.5 406.4 L847.9 410.3 L850.5 415.5 L854.2 419.8 L856.0 427.3 L859.8 430.7 L864.5 432.9 L867.0 427.3 L870.1 422.0 L878.6 422.6 L883.7 421.1 L888.0 417.9 L893.2 414.7 L898.3 411.3" fill="none" stroke="#0f9640" stroke-width="3.3" stroke-linejoin="round" stroke-linecap="round"/>
<path d="M888.0 417.9 L889.0 410.0 L888.0 402.0 L893.6 396.5 L899.3 396.9 L905.0 396.0 L910.5 396.6 L916.0 397.3" fill="none" stroke="#0f9640" stroke-width="3.3" stroke-linejoin="round" stroke-linecap="round"/>
<path d="M874.8 104.0 L875.5 110.0 L876.7 116.8 L879.2 121.4 L881.4 126.2 L886.0 127.6 L891.7 128.0 L896.0 133.0 L900.0 138.4 L905.6 143.2 L910.5 148.7 L915.9 152.1 L919.9 157.2 L925.2 157.5 L930.2 159.0 L937.0 165.6" fill="none" stroke="#0f9640" stroke-width="3.3" stroke-linejoin="round" stroke-linecap="round"/>
<path d="M947.0 183.0 L952.7 189.0 L957.4 192.8 L959.3 200.3" fill="none" stroke="#0f9640" stroke-width="3.3" stroke-linejoin="round" stroke-linecap="round"/>
<path d="M963.5 203.0 L965.8 202.0 L975.2 203.6 L973.5 208.7 L974.0 214.0 L972.4 223.0 L971.1 229.3 L969.9 235.7 L968.6 242.0 L967.0 246.9 L967.0 252.1 L965.5 257.0 L965.8 262.2 L961.1 265.4 L956.1 268.2 L951.1 270.9 L945.2 272.0 L940.5 275.3 L935.8 278.2 L930.2 279.2 L925.5 282.0 L919.0 287.5 L922.7 294.0 L920.7 298.7 L919.0 303.5 L916.9 310.3 L917.0 317.5 L920.6 321.8 L925.5 324.6 L923.8 329.4 L922.7 334.4 L924.5 343.0 L923.6 350.3 L917.0 352.9 L910.0 353.5 L903.0 356.0 L895.5 356.5" fill="none" stroke="#0f9640" stroke-width="3.3" stroke-linejoin="round" stroke-linecap="round"/>
<path d="M896.0 366.0 L900.1 369.1 L905.3 370.4 L910.5 371.9 L919.0 367.5 L924.0 365.6 L928.3 362.5" fill="none" stroke="#0f9640" stroke-width="3.3" stroke-linejoin="round" stroke-linecap="round"/>
<path d="M777.8 202.1 L778.5 214.0 L781.2 224.7" fill="none" stroke="#f57a1e" stroke-width="3.3"/>
<path d="M830.5 114.0 L832.5 110.0" fill="none" stroke="#f57a1e" stroke-width="3.3"/>
<path d="M874.8 104.0 L875.2 107.0" fill="none" stroke="#f57a1e" stroke-width="3.3"/>
<path d="M854.2 419.8 L855.5 424.0" fill="none" stroke="#f57a1e" stroke-width="3.3"/>
<path d="M866.5 429.5 L868.5 425.5" fill="none" stroke="#f57a1e" stroke-width="3.3"/>
<path d="M810.0 366.0 L813.0 370.0" fill="none" stroke="#f57a1e" stroke-width="3.3"/>
<path d="M796.5 254.0 L797.0 259.4" fill="none" stroke="#f57a1e" stroke-width="3.3"/>
<path d="M792.0 246.0 L794.0 249.5" fill="none" stroke="#f57a1e" stroke-width="3.3"/>
<path d="M924.0 364.8 L926.0 363.5" fill="none" stroke="#f57a1e" stroke-width="3.3"/>
<path d="M947.0 183.0 L948.0 184.5" fill="none" stroke="#f57a1e" stroke-width="3.3"/>
<circle cx="898.3" cy="411.3" r="2.6" fill="#0f9640"/>
<circle cx="916.0" cy="397.3" r="2.6" fill="#0f9640"/>
<g transform="translate(817.5 127.0) rotate(-52.0)"><path d="M8.500 0 L-6.500 -6.600 L-3.200 0 L-6.500 6.600 Z" fill="#1d8a3e" stroke="#fff" stroke-width="1.3" stroke-linejoin="round"/></g>
<g transform="translate(959.6 200.8) rotate(52.0)"><path d="M8.500 0 L-6.500 -6.600 L-3.200 0 L-6.500 6.600 Z" fill="#1d8a3e" stroke="#fff" stroke-width="1.3" stroke-linejoin="round"/></g>
<g transform="translate(808.3 358.0) rotate(-118.0)"><path d="M8.500 0 L-6.500 -6.600 L-3.200 0 L-6.500 6.600 Z" fill="#1d8a3e" stroke="#fff" stroke-width="1.3" stroke-linejoin="round"/></g>
<g transform="translate(889.5 365.0) rotate(180.0)"><path d="M8.500 0 L-6.500 -6.600 L-3.200 0 L-6.500 6.600 Z" fill="#1d8a3e" stroke="#fff" stroke-width="1.3" stroke-linejoin="round"/></g>
<g transform="translate(925.1 371.5) rotate(90.0)"><path d="M8.500 0 L-6.500 -6.600 L-3.200 0 L-6.500 6.600 Z" fill="#1d8a3e" stroke="#fff" stroke-width="1.3" stroke-linejoin="round"/></g>
<g><rect x="846.5" y="69.5" width="18" height="18" fill="#fff" stroke="#4848b8" stroke-width="1.2"/><path d="M850.2 72.2 h10.8 v6.6 h-9 v5.8 h-1.8 z" fill="#4a4ab8"/></g>
<g><rect x="850.0" y="69.5" width="18" height="18" fill="#fff" stroke="#4848b8" stroke-width="1.2"/><path d="M853.7 72.2 h10.8 v6.6 h-9 v5.8 h-1.8 z" fill="#4a4ab8"/></g>
<g><rect x="853.5" y="69.5" width="18" height="18" fill="#fff" stroke="#4848b8" stroke-width="1.2"/><path d="M857.2 72.2 h10.8 v6.6 h-9 v5.8 h-1.8 z" fill="#4a4ab8"/></g>
<g><rect x="854.5" y="67.5" width="18" height="18" fill="#fff" stroke="#4848b8" stroke-width="1.2"/><path d="M858.2 70.2 h10.8 v6.6 h-9 v5.8 h-1.8 z" fill="#4a4ab8"/></g>
<g><rect x="855.5" y="71.5" width="18" height="18" fill="#fff" stroke="#f04a38" stroke-width="1.2"/><circle cx="864.5" cy="80.5" r="6" fill="#fff" stroke="#f04a38" stroke-width="1.1"/><path d="M858.9 82.7 A6 6 0 0 0 870.1 82.7 L866.0 81.1 L863.5 81.9 Z" fill="#f04a38"/><path d="M864.5 82.0 L866.7 78.2" stroke="#f04a38" stroke-width="1.2"/></g>
<g><rect x="864.5" y="85.5" width="18" height="18" fill="#fff" stroke="#f04a38" stroke-width="1.2"/><circle cx="873.5" cy="94.5" r="6" fill="#fff" stroke="#f04a38" stroke-width="1.1"/><path d="M867.9 96.7 A6 6 0 0 0 879.1 96.7 L875.0 95.1 L872.5 95.9 Z" fill="#f04a38"/><path d="M873.5 96.0 L875.7 92.2" stroke="#f04a38" stroke-width="1.2"/></g>
<g><rect x="780.5" y="143.5" width="18" height="18" fill="#fff" stroke="#f04a38" stroke-width="1.2"/><circle cx="789.5" cy="152.5" r="6" fill="#fff" stroke="#f04a38" stroke-width="1.1"/><path d="M783.9 154.7 A6 6 0 0 0 795.1 154.7 L791.0 153.1 L788.5 153.9 Z" fill="#f04a38"/><path d="M789.5 154.0 L791.7 150.2" stroke="#f04a38" stroke-width="1.2"/></g>
<g><rect x="937.5" y="164.5" width="18" height="18" fill="#fff" stroke="#4848b8" stroke-width="1.2"/><path d="M941.2 167.2 h10.8 v6.6 h-9 v5.8 h-1.8 z" fill="#4a4ab8"/></g>
<g><rect x="961.5" y="223.5" width="18" height="18" fill="#fff" stroke="#f04a38" stroke-width="1.2"/><circle cx="970.5" cy="232.5" r="6" fill="#fff" stroke="#f04a38" stroke-width="1.1"/><path d="M964.9 234.7 A6 6 0 0 0 976.1 234.7 L972.0 233.1 L969.5 233.9 Z" fill="#f04a38"/><path d="M970.5 234.0 L972.7 230.2" stroke="#f04a38" stroke-width="1.2"/></g>
<g><rect x="786.5" y="259.5" width="18" height="18" fill="#fff" stroke="#4848b8" stroke-width="1.2"/><path d="M790.2 262.2 h10.8 v6.6 h-9 v5.8 h-1.8 z" fill="#4a4ab8"/></g>
<g><rect x="911.5" y="377.5" width="18" height="18" fill="#fff" stroke="#f04a38" stroke-width="1.2"/><circle cx="920.5" cy="386.5" r="6" fill="#fff" stroke="#f04a38" stroke-width="1.1"/><path d="M914.9 388.7 A6 6 0 0 0 926.1 388.7 L922.0 387.1 L919.5 387.9 Z" fill="#f04a38"/><path d="M920.5 388.0 L922.7 384.2" stroke="#f04a38" stroke-width="1.2"/></g>
<path d="M599.2 391 V433 M598.3 412 H696.2 M695.3 391 V412 M677 412 V433" fill="none" stroke="#000" stroke-width="1.9"/>
<g font-size="9.5" font-weight="bold" fill="#222" stroke="#fff" stroke-width="1.6" style="paint-order:stroke"><text x="633.9" y="403.5" textLength="26.8">10 km</text><text x="628.8" y="424.8" textLength="18.2">5 mi</text></g>
<text x="1068.7" y="425.4" textLength="144.5" font-size="10.5" font-weight="bold" fill="#2e3a52" stroke="#fff" stroke-width="1.8" style="paint-order:stroke">N 46° 03.9816' : E 005° 00.4813'</text>
</svg>
<div class="abs" style="left:598px;top:50px;width:28px;height:28px;background:#fff;box-shadow:0 1px 4px rgba(0,0,0,.22);border-radius:4px;"></div>
<div class="abs" style="left:598px;top:86px;width:28px;height:56px;background:#fff;box-shadow:0 1px 4px rgba(0,0,0,.22);border-radius:4px;"></div>
<div class="abs" style="left:598px;top:154px;width:28px;height:112px;background:#fff;box-shadow:0 1px 4px rgba(0,0,0,.22);border-radius:4px;"></div>
<svg class="abs" style="left:603px;top:55px" width="18" height="18" viewBox="0 0 18 18" fill="none" stroke="#4d566e" stroke-width="1.25"><circle cx="7.6" cy="7.8" r="4.7"/><path d="M11 11.2 L14.8 14.800"/></svg>
<svg class="abs" style="left:602px;top:92px" width="20" height="16" viewBox="0 0 20 16" fill="none" stroke="#4d566e" stroke-width="1.2"><path d="M1.5 8 C4.5 3.2 15.5 3.2 18.5 8 C15.5 12.8 4.5 12.8 1.5 8 Z"/><circle cx="10" cy="7.800" r="2.500" fill="#4d566e"/><circle cx="9.2" cy="7" r="0.900" fill="#fff" stroke="none"/></svg>
<svg class="abs" style="left:603px;top:122px" width="18" height="14" viewBox="0 0 18 14"><path d="M1 2.2 L5.4 0.8 V11.6 L1 13 Z" fill="#4a5d8a"/><path d="M6.8 0.8 L11.2 2.2 V13 L6.8 11.6 Z" fill="#3e4a6a"/><path d="M12.6 2.2 L17 0.8 V11.6 L12.6 13 Z" fill="#4a5d8a"/></svg>
<svg class="abs" style="left:602px;top:158px" width="20" height="20" viewBox="0 0 20 20" fill="none" stroke="#4d566e" stroke-width="1.3"><path d="M3.4 3.6 H16.6 M5.6 1.4 L3.2 3.6 L5.6 5.8 M14.4 1.4 L16.8 3.6 L14.4 5.8"/><rect x="2" y="9.6" width="16" height="7.4" rx="1.4"/><path d="M6 9.6 V12.6 M10 9.6 V13.4 M14 9.6 V12.6"/></svg>
<svg class="abs" style="left:603px;top:186px" width="18" height="20" viewBox="0 0 18 20" fill="none" stroke="#4d566e" stroke-width="1.4"><circle cx="14.4" cy="3.4" r="1.9"/><circle cx="3.4" cy="16.6" r="1.9"/><path d="M12.5 3.4 H6.2 A3.3 3.3 0 0 0 6.2 10 H11.8 A3.3 3.3 0 0 1 11.8 16.6 H5.3"/><circle cx="9" cy="10" r="0.9" fill="#4d566e"/></svg>
<svg class="abs" style="left:603px;top:214px" width="18" height="20" viewBox="0 0 18 20" fill="none" stroke="#4d566e" stroke-width="1.2"><path d="M4.4 1.2 A3 3 0 0 1 7.4 4.2 C7.4 6.2 4.4 9 4.4 9 C4.4 9 1.4 6.2 1.4 4.2 A3 3 0 0 1 4.4 1.2 Z M13.6 1.2 A3 3 0 0 1 16.600 4.2 C16.600 6.2 13.6 9 13.6 9 C13.6 9 10.6 6.2 10.6 4.2 A3 3 0 0 1 13.6 1.2 Z"/><circle cx="4.4" cy="4.2" r="0.9"/><circle cx="13.6" cy="4.2" r="0.9"/><circle cx="3.600" cy="15.4" r="1.8"/><circle cx="14.4" cy="15.4" r="1.8"/><path d="M5.4 15.4 H12.6"/></svg>
<svg class="abs" style="left:607px;top:245px" width="10" height="14" viewBox="0 0 10 14" fill="none" stroke="#3a4f8c" stroke-width="1.5"><path d="M2.4 2.6 L7.2 7.2 L2.4 11.800"/></svg>
<div class="abs" style="left:1185px;top:213px;width:28px;height:56px;background:#fff;box-shadow:0 1px 4px rgba(0,0,0,.22);border-radius:4px;"></div>
<div class="abs" style="left:1185px;top:241px;width:28px;height:1px;background:#e2e2e2;"></div>
<svg class="abs" style="left:1185px;top:213px" width="28" height="56" viewBox="0 0 28 56" fill="none" stroke="#4d566e" stroke-width="1.5"><path d="M9 14 H19 M14 9 V19 M9.2 42.500 H18.800"/></svg>
<div class="hl" style="left:588px;top:39px;width:635px;height:405px;"></div>
<div class="abs" style="left:247px;top:686px;width:978px;height:1px;background:#e2e2e2;"></div>
<div class="abs" style="left:247px;top:687px;width:978px;height:36px;background:#fff;"></div>
<svg class="abs" style="left:268px;top:698px" width="17" height="16" viewBox="0 0 17 16"><rect x="0.600" y="1.400" width="15" height="12.800" fill="#fff" stroke="#1a2038" stroke-width="1.200"/><rect x="0" y="0.800" width="4.900" height="14" fill="#1a2038"/></svg>
<svg class="abs" style="left:302.900px;top:698.800px" width="15" height="15" viewBox="0 0 15 15" fill="#1a2038"><rect x="0.00" y="0.00" width="3.700" height="3.700"/><rect x="0.00" y="5.10" width="3.700" height="3.700"/><rect x="0.00" y="10.20" width="3.700" height="3.700"/><rect x="5.10" y="0.00" width="3.700" height="3.700"/><rect x="5.10" y="5.10" width="3.700" height="3.700"/><rect x="5.10" y="10.20" width="3.700" height="3.700"/><rect x="10.20" y="0.00" width="3.700" height="3.700"/><rect x="10.20" y="5.10" width="3.700" height="3.700"/><rect x="10.20" y="10.20" width="3.700" height="3.700"/></svg>
<div class="t" style="left:600.40px;top:695.80px;font-size:14px;line-height:16px;color:#444857;letter-spacing:0.015px;">© Gurtam</div>
<svg class="abs" style="left:944px;top:698px" width="16" height="16" viewBox="0 0 16 16"><path d="M8 0.900 L10.200 5.600 L15.3 6.200 L11.5 9.700 L12.5 14.800 L8 12.3 L3.500 14.800 L4.500 9.700 L0.700 6.200 L5.800 5.600 Z" fill="#f5a31f"/></svg>
<svg class="abs" style="left:977px;top:699px" width="18" height="14" viewBox="0 0 18 14"><rect x="0.500" y="0.500" width="17" height="13" rx="1" fill="#a6a8ad"/><rect x="0.500" y="3" width="17" height="1.6" fill="#fff"/><rect x="3" y="7" width="9.500" height="1.600" fill="#fff"/><rect x="3" y="10" width="6.500" height="1.600" fill="#fff"/></svg>
<svg class="abs" style="left:1010px;top:698px" width="24" height="16" viewBox="0 0 24 16"><path d="M0.500 1 H16.500 V9 H11 V13 H0.500 Z" fill="#a6a8ad"/><path d="M1 1.500 L8.500 8 L16 1.500" fill="none" stroke="#fff" stroke-width="1.4"/><path d="M12.500 11.500 H22 M18.5 8.200 L22 11.500 L18.5 14.800" fill="none" stroke="#a6a8ad" stroke-width="1.7"/><path d="M14 8 l3 -2" stroke="#a6a8ad" stroke-width="1.4"/></svg>
<svg class="abs" style="left:1049px;top:698px" width="18" height="16" viewBox="0 0 18 16"><rect x="0.800" y="1" width="16" height="14" rx="1" fill="#a6a8ad"/><path d="M2.200 13 L6.500 7.500 L9.500 11 L12 8.500 L15.500 13 Z" fill="#fff"/><circle cx="5" cy="4.800" r="1.500" fill="#fff"/></svg>
<svg class="abs" style="left:1082px;top:700px" width="21" height="11" viewBox="0 0 21 11"><rect x="0.900" y="0.500" width="7.800" height="10.100" fill="#18213a"/><path d="M2.200 3 H7.400 M2.200 5.500 H7.400 M2.200 8 H7.400" stroke="#fff" stroke-width="1.100"/><rect x="10.600" y="0.500" width="9.200" height="10.100" fill="#18213a"/></svg>
<div class="t" style="left:1118.80px;top:695.80px;font-size:14px;line-height:16px;color:#444857;letter-spacing:-0.132px;">23:05:33 (+03)</div>
<div class="abs" style="left:587px;top:445.5px;width:638px;height:240.5px;background:#fff;"></div>
<svg class="abs" style="left:600px;top:456.300px" width="32" height="14" viewBox="0 0 32 14" fill="none" stroke="#b4b7c0" stroke-width="1.9"><path d="M7.2 2.2 L2.4 7 L7.2 11.800 M13.6 2.2 L8.800 7 L13.6 11.800 M28 2.2 L23.2 7 L28 11.800"/></svg>
<div class="abs" style="left:644px;top:450.3px;width:42px;height:26.6px;background:#f5f5f5;border:1px solid #dcdcdc;border-radius:4px"></div>
<div class="t" style="left:660.61px;top:454.90px;font-size:14px;line-height:16px;color:#b0b3bb;">1</div>
<div class="t" style="left:694.00px;top:454.90px;font-size:14px;line-height:16px;color:#2b2f3c;letter-spacing:-0.436px;">de 1</div>
<svg class="abs" style="left:732px;top:456.300px" width="32" height="14" viewBox="0 0 32 14" fill="none" stroke="#b4b7c0" stroke-width="1.9"><path d="M3.4 2.2 L8.200 7 L3.4 11.800 M18.8 2.2 L23.6 7 L18.8 11.800 M25.2 2.2 L30 7 L25.2 11.800"/></svg>
<div class="t" style="left:773.40px;top:454.90px;font-size:14px;line-height:16px;color:#2b2f3c;letter-spacing:-0.272px;">Líneas de 1 a 6 de 6</div>
<div class="abs" style="left:904px;top:450.3px;width:63.5px;height:26.6px;background:#fff;border:1px solid #dcdcdc;border-radius:4px"></div>
<div class="t" style="left:914.00px;top:454.90px;font-size:14px;line-height:16px;color:#2b2f3c;letter-spacing:-0.535px;">50</div>
<svg class="abs" style="left:945px;top:459.800px" width="12" height="8" viewBox="0 0 12 8" fill="none" stroke="#2f3447" stroke-width="1.6"><path d="M1.2 1.4 L6 6.2 L10.8 1.4"/></svg>
<svg class="abs" style="left:1090px;top:454.500px" width="21" height="19" viewBox="0 0 21 19" fill="none" stroke="#4d566e" stroke-width="1.5"><path d="M5.2 6.200 V1.800 H15.8 V6.200"/><rect x="1.8" y="6.200" width="17.4" height="8" rx="1.6"/><rect x="5.2" y="11.2" width="10.6" height="6" fill="#fff"/></svg>
<div class="abs" style="left:1122.5px;top:450.3px;width:90px;height:26.6px;background:#fff;border:1px solid #dcdcdc;border-radius:4px"></div>
<div class="t" style="left:1131.80px;top:454.90px;font-size:14px;line-height:16px;color:#2b2f3c;letter-spacing:-0.113px;">Exportar</div>
<svg class="abs" style="left:1192.500px;top:459.800px" width="12" height="8" viewBox="0 0 12 8" fill="none" stroke="#2f3447" stroke-width="1.6"><path d="M1.2 1.4 L6 6.2 L10.8 1.4"/></svg>
<div class="abs" style="left:587px;top:482px;width:621.5px;height:29px;background:#f5f5f5;"></div>
<div class="abs" style="left:1208.5px;top:482px;width:16.5px;height:29px;background:#f5f5f5;"></div>
<div class="abs" style="left:587px;top:482px;width:621.5px;height:1px;background:#dedede;"></div>
<div class="abs" style="left:587px;top:511px;width:621.5px;height:1px;background:#dedede;"></div>
<div class="abs" style="left:587px;top:540px;width:621.5px;height:1px;background:#dedede;"></div>
<div class="abs" style="left:587px;top:568px;width:621.5px;height:1px;background:#dedede;"></div>
<div class="abs" style="left:587px;top:597px;width:621.5px;height:1px;background:#dedede;"></div>
<div class="abs" style="left:587px;top:625px;width:621.5px;height:1px;background:#dedede;"></div>
<div class="abs" style="left:587px;top:654px;width:621.5px;height:1px;background:#dedede;"></div>
<div class="abs" style="left:587px;top:683px;width:621.5px;height:1px;background:#dedede;"></div>
<div class="abs" style="left:1209px;top:511px;width:16px;height:1px;background:#e6e6e6;"></div>
<div class="abs" style="left:587px;top:482px;width:1px;height:201.6px;background:#dedede;"></div>
<div class="abs" style="left:620px;top:482px;width:1px;height:201.6px;background:#dedede;"></div>
<div class="abs" style="left:766px;top:482px;width:1px;height:201.6px;background:#dedede;"></div>
<div class="abs" style="left:839px;top:482px;width:1px;height:201.6px;background:#dedede;"></div>
<div class="abs" style="left:936px;top:482px;width:1px;height:201.6px;background:#dedede;"></div>
<div class="abs" style="left:1069.5px;top:482px;width:1px;height:201.6px;background:#dedede;"></div>
<div class="abs" style="left:1208px;top:482px;width:1px;height:201.6px;background:#dedede;"></div>
<div class="t" style="left:628.70px;top:488.00px;font-size:14px;line-height:16px;color:#2a2e3d;letter-spacing:-0.128px;-webkit-text-stroke:0.45px #2a2e3d;">Comienzo</div>
<div class="t" style="left:774.60px;top:488.00px;font-size:14px;line-height:16px;color:#2a2e3d;letter-spacing:-0.066px;-webkit-text-stroke:0.45px #2a2e3d;">Duración</div>
<div class="t" style="left:848.00px;top:488.00px;font-size:14px;line-height:16px;color:#2a2e3d;letter-spacing:0.182px;-webkit-text-stroke:0.45px #2a2e3d;">Tiempo total</div>
<div class="t" style="left:944.80px;top:488.00px;font-size:14px;line-height:16px;color:#2a2e3d;letter-spacing:0.087px;-webkit-text-stroke:0.45px #2a2e3d;">Velocidad máxima</div>
<div class="t" style="left:1077.50px;top:488.00px;font-size:14px;line-height:16px;color:#2a2e3d;letter-spacing:0.020px;-webkit-text-stroke:0.45px #2a2e3d;">Límite de velocidad</div>
<div class="t" style="left:628.70px;top:516.40px;font-size:14px;line-height:16px;color:#d13fc6;letter-spacing:-0.136px;">2023-03-20 08:20:14</div>
<div class="t" style="left:774.60px;top:516.40px;font-size:14px;line-height:16px;color:#444857;letter-spacing:-0.215px;">0:00:29</div>
<div class="t" style="left:848.00px;top:516.40px;font-size:14px;line-height:16px;color:#444857;letter-spacing:-0.215px;">0:00:29</div>
<div class="t" style="left:944.80px;top:516.40px;font-size:14px;line-height:16px;color:#444857;letter-spacing:0.265px;">104 km/h</div>
<div class="t" style="left:1077.50px;top:516.40px;font-size:14px;line-height:16px;color:#444857;letter-spacing:0.243px;">80 km/h</div>
<svg class="abs" style="left:596px;top:516.8px" width="16" height="16" viewBox="0 0 16 16"><path d="M0.800 0.600 L4.8 2.9 L0.800 5.2 Z" fill="#1c1f2b"/><path d="M5.2 3 H10.400 A2.700 2.700 0 0 1 10.400 8.400 H5.600 A2.700 2.700 0 0 0 5.600 13.800 H9.600" fill="none" stroke="#1c1f2b" stroke-width="1.7"/><rect x="10.6" y="11.6" width="4" height="4" fill="#1c1f2b"/></svg>
<div class="t" style="left:628.70px;top:545.00px;font-size:14px;line-height:16px;color:#d13fc6;letter-spacing:-0.136px;">2023-03-20 09:58:09</div>
<div class="t" style="left:774.60px;top:545.00px;font-size:14px;line-height:16px;color:#444857;letter-spacing:-0.215px;">0:00:12</div>
<div class="t" style="left:848.00px;top:545.00px;font-size:14px;line-height:16px;color:#444857;letter-spacing:-0.215px;">0:00:12</div>
<div class="t" style="left:944.80px;top:545.00px;font-size:14px;line-height:16px;color:#444857;letter-spacing:0.172px;">82 km/h</div>
<div class="t" style="left:1077.50px;top:545.00px;font-size:14px;line-height:16px;color:#444857;letter-spacing:0.243px;">70 km/h</div>
<svg class="abs" style="left:596px;top:545.4px" width="16" height="16" viewBox="0 0 16 16"><path d="M0.800 0.600 L4.8 2.9 L0.800 5.2 Z" fill="#1c1f2b"/><path d="M5.2 3 H10.400 A2.700 2.700 0 0 1 10.400 8.400 H5.600 A2.700 2.700 0 0 0 5.600 13.800 H9.600" fill="none" stroke="#1c1f2b" stroke-width="1.7"/><rect x="10.6" y="11.6" width="4" height="4" fill="#1c1f2b"/></svg>
<div class="t" style="left:628.70px;top:573.60px;font-size:14px;line-height:16px;color:#d13fc6;letter-spacing:-0.081px;">2023-03-20 10:11:19</div>
<div class="t" style="left:774.60px;top:573.60px;font-size:14px;line-height:16px;color:#444857;letter-spacing:-0.215px;">0:00:19</div>
<div class="t" style="left:848.00px;top:573.60px;font-size:14px;line-height:16px;color:#444857;letter-spacing:-0.215px;">0:00:19</div>
<div class="t" style="left:944.80px;top:573.60px;font-size:14px;line-height:16px;color:#444857;letter-spacing:0.265px;">102 km/h</div>
<div class="t" style="left:1077.50px;top:573.60px;font-size:14px;line-height:16px;color:#444857;letter-spacing:0.243px;">80 km/h</div>
<svg class="abs" style="left:596px;top:574.0px" width="16" height="16" viewBox="0 0 16 16"><path d="M0.800 0.600 L4.8 2.9 L0.800 5.2 Z" fill="#1c1f2b"/><path d="M5.2 3 H10.400 A2.700 2.700 0 0 1 10.400 8.400 H5.600 A2.700 2.700 0 0 0 5.600 13.800 H9.600" fill="none" stroke="#1c1f2b" stroke-width="1.7"/><rect x="10.6" y="11.6" width="4" height="4" fill="#1c1f2b"/></svg>
<div class="t" style="left:628.70px;top:602.20px;font-size:14px;line-height:16px;color:#d13fc6;letter-spacing:-0.136px;">2023-03-20 10:15:13</div>
<div class="t" style="left:774.60px;top:602.20px;font-size:14px;line-height:16px;color:#444857;letter-spacing:-0.215px;">0:00:47</div>
<div class="t" style="left:848.00px;top:602.20px;font-size:14px;line-height:16px;color:#444857;letter-spacing:-0.215px;">0:00:47</div>
<div class="t" style="left:944.80px;top:602.20px;font-size:14px;line-height:16px;color:#444857;letter-spacing:0.395px;">112 km/h</div>
<div class="t" style="left:1077.50px;top:602.20px;font-size:14px;line-height:16px;color:#444857;letter-spacing:0.243px;">80 km/h</div>
<svg class="abs" style="left:596px;top:602.6px" width="16" height="16" viewBox="0 0 16 16"><path d="M0.800 0.600 L4.8 2.9 L0.800 5.2 Z" fill="#1c1f2b"/><path d="M5.2 3 H10.400 A2.700 2.700 0 0 1 10.400 8.400 H5.600 A2.700 2.700 0 0 0 5.600 13.800 H9.600" fill="none" stroke="#1c1f2b" stroke-width="1.7"/><rect x="10.6" y="11.6" width="4" height="4" fill="#1c1f2b"/></svg>
<div class="t" style="left:628.70px;top:630.80px;font-size:14px;line-height:16px;color:#d13fc6;letter-spacing:-0.136px;">2023-03-20 10:39:06</div>
<div class="t" style="left:774.60px;top:630.80px;font-size:14px;line-height:16px;color:#444857;letter-spacing:-0.215px;">0:00:18</div>
<div class="t" style="left:848.00px;top:630.80px;font-size:14px;line-height:16px;color:#444857;letter-spacing:-0.215px;">0:00:18</div>
<div class="t" style="left:944.80px;top:630.80px;font-size:14px;line-height:16px;color:#444857;letter-spacing:0.395px;">110 km/h</div>
<div class="t" style="left:1077.50px;top:630.80px;font-size:14px;line-height:16px;color:#444857;letter-spacing:0.243px;">80 km/h</div>
<svg class="abs" style="left:596px;top:631.2px" width="16" height="16" viewBox="0 0 16 16"><path d="M0.800 0.600 L4.8 2.9 L0.800 5.2 Z" fill="#1c1f2b"/><path d="M5.2 3 H10.400 A2.700 2.700 0 0 1 10.400 8.400 H5.600 A2.700 2.700 0 0 0 5.600 13.800 H9.600" fill="none" stroke="#1c1f2b" stroke-width="1.7"/><rect x="10.6" y="11.6" width="4" height="4" fill="#1c1f2b"/></svg>
<div class="t" style="left:628.70px;top:659.40px;font-size:14px;line-height:16px;color:#d13fc6;letter-spacing:-0.081px;">2023-03-20 11:20:15</div>
<div class="t" style="left:774.60px;top:659.40px;font-size:14px;line-height:16px;color:#444857;letter-spacing:-0.215px;">0:00:29</div>
<div class="t" style="left:848.00px;top:659.40px;font-size:14px;line-height:16px;color:#444857;letter-spacing:-0.215px;">0:00:29</div>
<div class="t" style="left:944.80px;top:659.40px;font-size:14px;line-height:16px;color:#444857;letter-spacing:0.265px;">104 km/h</div>
<div class="t" style="left:1077.50px;top:659.40px;font-size:14px;line-height:16px;color:#444857;letter-spacing:0.243px;">80 km/h</div>
<svg class="abs" style="left:596px;top:659.8px" width="16" height="16" viewBox="0 0 16 16"><path d="M0.800 0.600 L4.8 2.9 L0.800 5.2 Z" fill="#1c1f2b"/><path d="M5.2 3 H10.400 A2.700 2.700 0 0 1 10.400 8.400 H5.600 A2.700 2.700 0 0 0 5.600 13.800 H9.600" fill="none" stroke="#1c1f2b" stroke-width="1.7"/><rect x="10.6" y="11.6" width="4" height="4" fill="#1c1f2b"/></svg>
<div class="hl" style="left:582px;top:478px;width:631px;height:210px;"></div>
</div></div>
<div class="callout" style="left:0.0px;top:398.0px;width:213.0px;height:81.0px"></div>
<div class="t" style="left:12.70px;top:410.40px;font-size:16px;line-height:17px;color:#fff;letter-spacing:0.015px;">Componentes del informe:</div>
<div class="t" style="left:36.80px;top:429.80px;font-size:16px;line-height:17px;color:#fff;letter-spacing:-0.038px;">estadísticas, tablas,</div>
<div class="t" style="left:82.70px;top:448.60px;font-size:16px;line-height:17px;color:#fff;letter-spacing:-0.060px;">gráfica</div>
<div class="callout" style="left:1255.0px;top:210.0px;width:180.0px;height:62.0px"></div>
<div class="t" style="left:1267.90px;top:222.50px;font-size:16px;line-height:17px;color:#fff;letter-spacing:-0.020px;">Mapa con el recorrido</div>
<div class="t" style="left:1297.00px;top:241.50px;font-size:16px;line-height:17px;color:#fff;letter-spacing:-0.110px;">y marcadores</div>
<div class="callout" style="left:1255.0px;top:552.0px;width:148.0px;height:62.0px"></div>
<div class="t" style="left:1267.90px;top:564.60px;font-size:16px;line-height:17px;color:#fff;letter-spacing:0.051px;">Tabla del informe</div>
<div class="t" style="left:1282.50px;top:583.80px;font-size:16px;line-height:17px;color:#fff;letter-spacing:-0.033px;">seleccionada</div>
<div class="abs" style="left:213px;top:437px;width:32.5px;height:3px;background:#9aa4ba;"></div>
<div class="abs" style="left:213px;top:438px;width:33px;height:1px;background:#0b2048;"></div>
<svg class="abs" style="left:244px;top:432px" width="12" height="12" viewBox="0 0 12 12"><circle cx="6.00" cy="6.50" r="3.900" fill="#fff"/><circle cx="6.00" cy="6.50" r="2.900" fill="#0b2048"/></svg>
<div class="abs" style="left:1227px;top:239px;width:28px;height:4px;background:#fff;"></div>
<div class="abs" style="left:1227px;top:240px;width:28px;height:2px;background:#0b2048;"></div>
<svg class="abs" style="left:1216px;top:235px" width="12" height="12" viewBox="0 0 12 12"><circle cx="6.00" cy="6.00" r="3.900" fill="#fff"/><circle cx="6.00" cy="6.00" r="2.900" fill="#0b2048"/></svg>
<div class="abs" style="left:1227px;top:581px;width:28px;height:4px;background:#fff;"></div>
<div class="abs" style="left:1216px;top:582px;width:39px;height:2px;background:#0b2048;"></div>
<svg class="abs" style="left:1206px;top:577px" width="12" height="12" viewBox="0 0 12 12"><circle cx="6.00" cy="6.00" r="3.900" fill="#fff"/><circle cx="6.00" cy="6.00" r="2.900" fill="#0b2048"/></svg>
</body></html>
